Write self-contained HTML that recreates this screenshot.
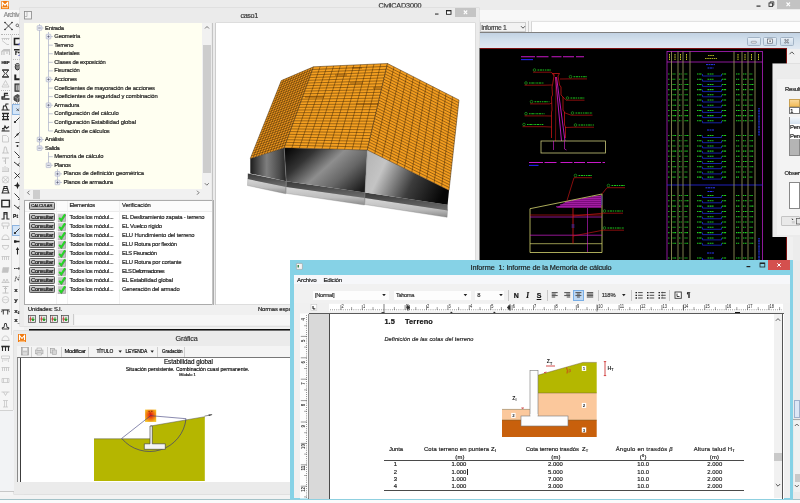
<!DOCTYPE html>
<html><head><meta charset="utf-8"><title>CivilCAD3000</title>
<style>
html,body{margin:0;padding:0;background:#f0f0f0}
body{width:800px;height:503px;overflow:hidden;position:relative;font-family:"Liberation Sans",sans-serif}
#root{position:absolute;left:0;top:0;width:800px;height:503px;overflow:hidden;filter:blur(0.3px)}
.r{position:absolute;display:block}
.t{position:absolute;white-space:nowrap;font-family:"Liberation Sans",sans-serif;-webkit-text-stroke:0.18px currentColor}
svg{overflow:visible}
</style></head>
<body><div id="root">
<div class="r" style="left:0px;top:0px;width:800px;height:503px;background:#f0f0f0;"></div>
<div class="r" style="left:0px;top:0px;width:800px;height:10px;background:#ececec;"></div>
<div class="r" style="left:1px;top:1px;width:8px;height:8px;background:#f07a10;"></div>
<svg class="r" style="left:1px;top:1px" width="8" height="8" viewBox="0 0 8 8"><path d="M1.3 5.5V1.5L4 4.2 6.7 1.5V5.5" stroke="#fff" stroke-width="1.2" fill="none"/><rect x="1" y="6.2" width="6" height="1" fill="#ffd9a8"/></svg>
<div class="t" style="left:378.50px;top:1.08px;font-size:7.2px;line-height:9.2px;color:#333;letter-spacing:-0.151px;">CivilCAD3000</div>
<div class="r" style="left:777px;top:0px;width:23px;height:9px;background:#c3c3c3;"></div>
<svg class="r" style="left:750px;top:0" width="50" height="10" viewBox="0 0 50 10"><rect x="6.5" y="5.5" width="4" height="1.2" fill="#333"/><rect x="19" y="3" width="3.6" height="3.4" fill="none" stroke="#333" stroke-width="0.9"/><path d="M20.2 3V1.8h3.6v3.4H22.6" fill="none" stroke="#333" stroke-width="0.8"/><path d="M36.5 2.5l3.5 3.6M40 2.5l-3.5 3.6" stroke="#fff" stroke-width="1.1"/></svg>
<div class="r" style="left:0px;top:10px;width:800px;height:10px;background:#f8f8f8;"></div>
<div class="t" style="left:3.80px;top:11.43px;font-size:6.6px;line-height:8.6px;color:#8a8a8a;letter-spacing:-0.523px;">Archiv</div>
<div class="r" style="left:0px;top:20px;width:800px;height:13px;background:#f4f4f4;"></div>
<div class="r" style="left:0px;top:32px;width:800px;height:1px;background:#dcdcdc;"></div>
<div class="r" style="left:0px;top:20px;width:24px;height:483px;background:#f5f5f5;"></div>
<div class="r" style="left:11.2px;top:35px;width:0.7px;height:300px;background:#dcdcdc;"></div>
<svg class="r" style="left:3px;top:21px" width="20" height="11" viewBox="0 0 20 11"><path d="M2 1.5l7 7M9 1.5l-7 7" stroke="#222" stroke-width="0.8"/><circle cx="2" cy="1.5" r="0.8" fill="#222"/><circle cx="9" cy="1.5" r="0.8" fill="#222"/><circle cx="2" cy="8.5" r="0.8" fill="#222"/><circle cx="9" cy="8.5" r="0.8" fill="#222"/><circle cx="14.3" cy="4.3" r="1.3" fill="none" stroke="#444" stroke-width="0.7"/><path d="M15.3 5.4l1.1 1.1" stroke="#444" stroke-width="0.7"/></svg>
<div class="r" style="left:1px;top:33.5px;width:18px;height:0;border-top:0.8px dotted #b5b5b5"></div>
<svg class="r" style="left:1px;top:36.5px" width="9" height="9" viewBox="0 0 9 9"><path d="M0.5 1.5h8M1.5 1.5v1.5M3.5 1.5v1.5M5.5 1.5v1.5M7.5 1.5v1.5M1 3.5l5 4h2" fill="none" stroke="#c2c2c2" stroke-width="0.8"/></svg>
<svg class="r" style="left:1px;top:46.5px" width="9" height="9" viewBox="0 0 9 9"><path d="M0.8 8V4.5L3 2.5h5.5V8M3 4.5V8M6 4.5V7" fill="none" stroke="#c2c2c2" stroke-width="1.1"/><path d="M1 4l2-1.5h5.5v2H1z" fill="#c2c2c2"/></svg>
<div class="t" style="left:1.60px;top:59.84px;font-size:4.2px;line-height:6.2px;color:#111;letter-spacing:-0.267px;font-weight:bold;">HEF</div>
<svg class="r" style="left:1px;top:68.5px" width="9" height="9" viewBox="0 0 9 9"><path d="M1.5 1h6L5 4.5 7.5 8h-6L4 4.500z" fill="none" stroke="#2a2a2a" stroke-width="0.9"/><path d="M1 1h7M1 8h7" stroke="#2a2a2a" stroke-width="1"/></svg>
<svg class="r" style="left:1px;top:79.0px" width="9" height="9" viewBox="0 0 9 9"><path d="M1 8l3.5-6.500L8 8zM3 6h3" fill="none" stroke="#c2c2c2" stroke-width="0.8"/></svg>
<svg class="r" style="left:1px;top:90.5px" width="9" height="9" viewBox="0 0 9 9"><path d="M0.5 8h8M1 8V6h2.500V2.500H7" fill="none" stroke="#2a2a2a" stroke-width="1.3"/><path d="M4 4.500h3.500" stroke="#2a2a2a" stroke-width="0.7"/></svg>
<svg class="r" style="left:1px;top:101.5px" width="9" height="9" viewBox="0 0 9 9"><path d="M0.5 8h8M2 8l0.500-4h2l0.500-2h2.500M5 4l1.500 4" fill="none" stroke="#2a2a2a" stroke-width="1.1"/></svg>
<svg class="r" style="left:1px;top:112.0px" width="9" height="9" viewBox="0 0 9 9"><path d="M1 1.500h7M1 7.500h7" stroke="#2a2a2a" stroke-width="1.700"/><path d="M2.500 2v5M6.500 2v5M1 4.500h7" stroke="#2a2a2a" stroke-width="1.100"/></svg>
<svg class="r" style="left:1px;top:123.0px" width="9" height="9" viewBox="0 0 9 9"><path d="M0.500 8h8M1 5.500h2l1-2.500 1.500 2.500L8 3.500" fill="none" stroke="#2a2a2a" stroke-width="1.100"/><path d="M1 7h3" stroke="#2a2a2a" stroke-width="1"/></svg>
<svg class="r" style="left:1px;top:133.5px" width="9" height="9" viewBox="0 0 9 9"><path d="M1.500 1.500h4l2 2V8h-6z" fill="none" stroke="#c2c2c2" stroke-width="0.800"/></svg>
<svg class="r" style="left:1px;top:144.5px" width="9" height="9" viewBox="0 0 9 9"><path d="M1 8h7M2.500 8l1-6h1.500l1.500 6" fill="none" stroke="#c2c2c2" stroke-width="0.900"/></svg>
<svg class="r" style="left:1px;top:155.5px" width="9" height="9" viewBox="0 0 9 9"><path d="M1 2h7M4.500 2v6M2.500 5h2" fill="none" stroke="#c2c2c2" stroke-width="1"/></svg>
<svg class="r" style="left:1px;top:164.0px" width="9" height="9" viewBox="0 0 9 9"><path d="M1 7.500h7M2 7V3M4 7V2M6 7V3M7.500 7V4" fill="none" stroke="#c2c2c2" stroke-width="0.800"/></svg>
<svg class="r" style="left:1px;top:174.5px" width="9" height="9" viewBox="0 0 9 9"><path d="M1.500 2l6 5.500M7.500 2l-6 5.500" stroke="#c2c2c2" stroke-width="0.800"/><circle cx="4.500" cy="4.700" r="3.300" fill="none" stroke="#c2c2c2" stroke-width="0.700"/></svg>
<svg class="r" style="left:1px;top:185.0px" width="9" height="9" viewBox="0 0 9 9"><path d="M0.500 8h8M1.500 7.500l1-4h4l1 4M3 3.500V1.500h3v2" fill="none" stroke="#2a2a2a" stroke-width="1.100"/><path d="M2.500 5.500h4" stroke="#2a2a2a" stroke-width="0.700"/></svg>
<svg class="r" style="left:1px;top:199.0px" width="9" height="9" viewBox="0 0 9 9"><rect x="0.800" y="1.300" width="7.600" height="6.500" fill="none" stroke="#2a2a2a" stroke-width="1.400"/></svg>
<svg class="r" style="left:1px;top:210.5px" width="9" height="9" viewBox="0 0 9 9"><path d="M0.500 8h2.500V3h3v5h2.500M3 3V1.500h3V3" fill="none" stroke="#2a2a2a" stroke-width="1.200"/></svg>
<svg class="r" style="left:1px;top:221.0px" width="9" height="9" viewBox="0 0 9 9"><path d="M1 2h7v3H1zM2.500 5v3M6.500 5v3" fill="none" stroke="#c2c2c2" stroke-width="0.800"/></svg>
<svg class="r" style="left:1px;top:232.0px" width="9" height="9" viewBox="0 0 9 9"><path d="M1 7.500c0-6 7-6 7 0zM0.500 7.500h8" fill="none" stroke="#c2c2c2" stroke-width="0.800"/></svg>
<svg class="r" style="left:1px;top:242.5px" width="9" height="9" viewBox="0 0 9 9"><path d="M1 2.500h7M1.500 2.500c0 5 6 5 6 0" fill="none" stroke="#c2c2c2" stroke-width="0.800"/></svg>
<svg class="r" style="left:1px;top:253.5px" width="9" height="9" viewBox="0 0 9 9"><path d="M0.500 2.500h8M1.500 2.500V6M3.500 2.500V6M5.500 2.500V6M7.500 2.500V6" fill="none" stroke="#c2c2c2" stroke-width="0.800"/></svg>
<svg class="r" style="left:1px;top:264.5px" width="9" height="9" viewBox="0 0 9 9"><path d="M2 2.500h6L7 7.500H1z" fill="#c2c2c2" stroke="#c2c2c2" stroke-width="0.500"/></svg>
<svg class="r" style="left:1px;top:275.0px" width="9" height="9" viewBox="0 0 9 9"><path d="M0.500 7.500h8M1.500 7.500L3 4l1.500 3.500L6 4l1.500 3.500" fill="none" stroke="#c2c2c2" stroke-width="0.800"/></svg>
<svg class="r" style="left:1px;top:285.0px" width="9" height="9" viewBox="0 0 9 9"><path d="M1.500 1.500h6M1.500 8h6M4.500 1.500V8M3 3.500h3" fill="none" stroke="#c2c2c2" stroke-width="1"/></svg>
<svg class="r" style="left:1px;top:295.2px" width="9" height="9" viewBox="0 0 9 9"><circle cx="4.500" cy="4.700" r="3.200" fill="none" stroke="#c2c2c2" stroke-width="0.800"/><path d="M2 4.700h5" stroke="#c2c2c2" stroke-width="0.600"/></svg>
<svg class="r" style="left:1px;top:307.0px" width="9" height="9" viewBox="0 0 9 9"><path d="M0.500 3h8" stroke="#2a2a2a" stroke-width="1.100"/><path d="M2.300 3V7.500M6.700 3V7.500M0.800 4v1.200M8.200 4v1.200" stroke="#2a2a2a" stroke-width="0.900" fill="none"/></svg>
<svg class="r" style="left:1px;top:320.5px" width="9" height="9" viewBox="0 0 9 9"><path d="M1 8h7M1.300 8V6.500h1.700L3.700 2.500h1.600l0.700 4H7.700V8" fill="none" stroke="#2a2a2a" stroke-width="0.900"/></svg>
<svg class="r" style="left:1px;top:332.5px" width="9" height="9" viewBox="0 0 9 9"><path d="M1 7.500c0-6 7-6 7 0zM0.500 7.500h8" fill="none" stroke="#c2c2c2" stroke-width="0.800"/></svg>
<svg class="r" style="left:1px;top:343.5px" width="9" height="9" viewBox="0 0 9 9"><path d="M0.300 2.500h8.400" stroke="#2a2a2a" stroke-width="1.600"/><path d="M1.500 3V7M4.500 3V7M7.500 3V7" stroke="#2a2a2a" stroke-width="1.100"/></svg>
<svg class="r" style="left:1px;top:354.1px" width="9" height="9" viewBox="0 0 9 9"><path d="M0.500 2h8v2.500h-8zM2 4.500L1.500 8M7 4.500L7.500 8M3 6h3" fill="none" stroke="#c2c2c2" stroke-width="0.700"/></svg>
<svg class="r" style="left:1px;top:365.0px" width="9" height="9" viewBox="0 0 9 9"><path d="M0.500 2.500h8M1.500 2.500V6M3.500 2.500V6M5.500 2.500V6M7.500 2.500V6" fill="none" stroke="#c2c2c2" stroke-width="0.800"/></svg>
<svg class="r" style="left:1px;top:375.5px" width="9" height="9" viewBox="0 0 9 9"><path d="M1 2.500h7v4H1zM2.500 2.500v4M6.500 2.500v4" fill="none" stroke="#c2c2c2" stroke-width="0.700"/></svg>
<svg class="r" style="left:1px;top:388.5px" width="9" height="9" viewBox="0 0 9 9"><path d="M0.500 3h8M2.500 3l2 3.500 2-3.500" fill="none" stroke="#c2c2c2" stroke-width="0.800"/></svg>
<svg class="r" style="left:1px;top:398.5px" width="9" height="9" viewBox="0 0 9 9"><path d="M2 1.500h5M2 8h5M3.500 1.500V8M5.500 1.500V8" fill="none" stroke="#c2c2c2" stroke-width="0.700"/></svg>
<svg class="r" style="left:12.5px;top:36.5px" width="9" height="9" viewBox="0 0 9 9"><path d="M7 1.500H1.500v6H7" fill="none" stroke="#222" stroke-width="1.600"/><path d="M4.500 8l3.500-3.500V8z" fill="#3a3ab8"/></svg>
<svg class="r" style="left:12.5px;top:47.5px" width="9" height="9" viewBox="0 0 9 9"><path d="M1 1.800h6.500M2 4h2.500M2 6h1.500M5 4.500h2.500" fill="none" stroke="#222" stroke-width="1.500"/><path d="M5 8l3-3v3z" fill="#3a3ab8"/></svg>
<svg class="r" style="left:12.5px;top:62.0px" width="9" height="9" viewBox="0 0 9 9"><ellipse cx="4.500" cy="4.800" rx="2.300" ry="3.200" fill="#8a8a8a" stroke="#222" stroke-width="0.900"/><ellipse cx="4.500" cy="2.800" rx="2.300" ry="1" fill="#ccc" stroke="#222" stroke-width="0.600"/></svg>
<svg class="r" style="left:12.5px;top:72.5px" width="9" height="9" viewBox="0 0 9 9"><path d="M2.300 1.500v4.800H8" fill="none" stroke="#222" stroke-width="2"/></svg>
<svg class="r" style="left:12.5px;top:82.5px" width="9" height="9" viewBox="0 0 9 9"><rect x="2" y="1" width="5.500" height="7.200" fill="#8a8a8a" stroke="#222" stroke-width="1"/><path d="M3.500 2.500v4.500M5.500 2.500v4.500" stroke="#ddd" stroke-width="0.500"/></svg>
<svg class="r" style="left:12.5px;top:93.0px" width="9" height="9" viewBox="0 0 9 9"><path d="M1 3.500l3.500-2 3.500 2v3.500l-3.500 2-3.500-2z" fill="#555" stroke="#222" stroke-width="0.700"/><path d="M1 3.500l3.500 2 3.500-2M4.500 5.500V9" stroke="#bbb" stroke-width="0.500" fill="none"/></svg>
<div class="r" style="left:12.3px;top:103.5px;width:9.5px;height:11px;background:#d3e5f8;border:0.6px solid #8db4e0;box-sizing:border-box"></div>
<svg class="r" style="left:12.5px;top:104.5px" width="9" height="9" viewBox="0 0 9 9"><path d="M3.500 3.500l2.500 2.500M6 3.500L3.500 6" stroke="#333" stroke-width="0.700"/></svg>
<svg class="r" style="left:12.5px;top:115.0px" width="9" height="9" viewBox="0 0 9 9"><path d="M1.500 7.500l6-6" stroke="#222" stroke-width="0.900"/><circle cx="2" cy="7" r="1.100" fill="#222"/></svg>
<svg class="r" style="left:12.5px;top:130.3px" width="9" height="9" viewBox="0 0 9 9"><path d="M1.500 7.500l6-6" stroke="#222" stroke-width="0.900"/><circle cx="4.500" cy="4.500" r="1" fill="#222"/></svg>
<svg class="r" style="left:12.5px;top:140.3px" width="9" height="9" viewBox="0 0 9 9"><circle cx="4.500" cy="6" r="1" fill="#222"/><path d="M2.500 2.500h4" stroke="#222" stroke-width="0.800"/></svg>
<svg class="r" style="left:12.5px;top:149.8px" width="9" height="9" viewBox="0 0 9 9"><path d="M1.500 1.500l6 6" stroke="#222" stroke-width="0.900"/><path d="M5 7.500h2.500V5" stroke="#222" stroke-width="0.800" fill="none"/></svg>
<svg class="r" style="left:12.5px;top:159.5px" width="9" height="9" viewBox="0 0 9 9"><path d="M1 2l6.500 5M7.500 2.500l-3 2.500" stroke="#222" stroke-width="0.900" fill="none"/></svg>
<svg class="r" style="left:12.5px;top:170.5px" width="9" height="9" viewBox="0 0 9 9"><path d="M1.500 1.500l6 6M7.500 1.500l-6 6" stroke="#222" stroke-width="0.900"/></svg>
<svg class="r" style="left:12.5px;top:181.1px" width="9" height="9" viewBox="0 0 9 9"><path d="M4.500 0.800l1 2.700 2.700 1-2.700 1-1 2.700-1-2.700-2.700-1 2.700-1z" fill="#222"/></svg>
<svg class="r" style="left:12.5px;top:191.5px" width="9" height="9" viewBox="0 0 9 9"><path d="M1.500 1.500l6 6" stroke="#222" stroke-width="0.900"/><path d="M5 7.500h2.500V5" stroke="#222" stroke-width="0.800" fill="none"/></svg>
<svg class="r" style="left:12.5px;top:203.0px" width="9" height="9" viewBox="0 0 9 9"><path d="M1 2l6.500 5M7.500 2.500l-3 2.500" stroke="#222" stroke-width="0.900" fill="none"/></svg>
<div class="t" style="left:13.00px;top:214.18px;font-size:4.8px;line-height:6.8px;color:#111;letter-spacing:0.400px;font-weight:bold;">Pt</div>
<div class="r" style="left:12.3px;top:224.5px;width:9.5px;height:11px;background:#d3e5f8;border:0.6px solid #8db4e0;box-sizing:border-box"></div>
<svg class="r" style="left:12.5px;top:225.5px" width="9" height="9" viewBox="0 0 9 9"><path d="M1.500 7.500l6-6" stroke="#222" stroke-width="0.900"/><circle cx="2" cy="7" r="1.100" fill="#222"/></svg>
<svg class="r" style="left:12.5px;top:237.3px" width="9" height="9" viewBox="0 0 9 9"><path d="M1 4.500h7" stroke="#222" stroke-width="1.500"/><rect x="1" y="3.300" width="2.400" height="2.400" fill="#222"/></svg>
<svg class="r" style="left:12.5px;top:246.0px" width="9" height="9" viewBox="0 0 9 9"><path d="M4.500 8.500V2.500" stroke="#222" stroke-width="1.100"/><path d="M2.800 4L4.500 1l1.700 3z" fill="#222"/></svg>
<svg class="r" style="left:12.5px;top:264.0px" width="9" height="9" viewBox="0 0 9 9"><path d="M1 4.500h6" stroke="#222" stroke-width="0.900" stroke-dasharray="1.500 0.700"/><path d="M5.500 3l2.500 1.500-2.500 1.500z" fill="#222"/></svg>
<svg class="r" style="left:12.5px;top:273.9px" width="9" height="9" viewBox="0 0 9 9"><path d="M2 7.500l1-5 2.500 4 1-5" stroke="#222" stroke-width="0.800" fill="none" stroke-dasharray="1.400 0.600"/></svg>
<div class="t" style="left:14.30px;top:286.36px;font-size:6.2px;line-height:8.2px;color:#111;letter-spacing:0.000px;font-weight:bold;">x</div>
<div class="t" style="left:14.30px;top:296.26px;font-size:6.2px;line-height:8.2px;color:#111;letter-spacing:0.000px;font-weight:bold;">y</div>
<div class="t" style="left:14.30px;top:307.36px;font-size:6.2px;line-height:8.2px;color:#111;letter-spacing:0.000px;font-weight:bold;">x</div>
<div class="t" style="left:17.80px;top:311.01px;font-size:3.4px;line-height:5.4px;color:#111;letter-spacing:0.000px;font-weight:bold;">2</div>
<div class="t" style="left:14.30px;top:316.36px;font-size:6.2px;line-height:8.2px;color:#111;letter-spacing:0.000px;font-weight:bold;">x</div>
<div class="t" style="left:17.80px;top:320.01px;font-size:3.4px;line-height:5.4px;color:#111;letter-spacing:0.000px;font-weight:bold;">_</div>
<div class="r" style="left:13px;top:59.4px;width:7px;height:0;border-top:0.8px dotted #bbb"></div>
<div class="r" style="left:13px;top:103.2px;width:7px;height:0;border-top:0.8px dotted #bbb"></div>
<div class="r" style="left:1px;top:89.5px;width:9px;height:0;border-top:0.8px dotted #bbb"></div>
<div class="r" style="left:479.5px;top:21.8px;width:46.5px;height:10px;background:#f2f2f2;border:0.600px solid #cdcdcd;box-sizing:border-box"></div>
<div class="t" style="left:481.20px;top:24.01px;font-size:6.8px;line-height:8.8px;color:#3c3c3c;letter-spacing:-0.392px;">Informe 1</div>
<svg class="r" style="left:519.5px;top:25.3px" width="6" height="5" viewBox="0 0 6 5"><path d="M1 1.200l2 2 2-2" stroke="#444" stroke-width="0.900" fill="none"/></svg>
<div class="r" style="left:528px;top:21px;width:0.7px;height:11px;background:#cfcfcf;"></div>
<div class="r" style="left:530.5px;top:21px;width:270px;height:11px;background:#fdfdfd;border-left:0.6px solid #d5d5d5;border-top:0.6px solid #e2e2e2;box-sizing:border-box"></div>
<div class="r" style="left:479.5px;top:32px;width:321px;height:1px;background:#808080;"></div>
<div class="r" style="left:479.5px;top:33px;width:321px;height:15.5px;background:linear-gradient(#c2d2e3,#d3e0ec 45%,#e1e9f2);"></div>
<div class="r" style="left:746.5px;top:36.7px;width:14.3px;height:9px;background:linear-gradient(#e9f0f7,#cddbe9);border:0.6px solid #a3b4c6;border-radius:1.5px;box-sizing:border-box"></div>
<div class="r" style="left:763px;top:36.7px;width:14.3px;height:9px;background:linear-gradient(#e9f0f7,#cddbe9);border:0.6px solid #a3b4c6;border-radius:1.5px;box-sizing:border-box"></div>
<div class="r" style="left:779.5px;top:36.7px;width:14.3px;height:9px;background:linear-gradient(#e9f0f7,#cddbe9);border:0.6px solid #a3b4c6;border-radius:1.5px;box-sizing:border-box"></div>
<svg class="r" style="left:746px;top:36px" width="50" height="11" viewBox="0 0 50 11"><rect x="5.3" y="5.3" width="5" height="1.8" rx="0.5" fill="#f8f8f8" stroke="#5a6270" stroke-width="0.5"/><rect x="21.6" y="3" width="5" height="4.2" fill="#f8f8f8" stroke="#5a6270" stroke-width="0.7"/><rect x="23.200" y="4.500" width="1.800" height="1.300" fill="#5a6270"/><path d="M38.600 3.200l4 4M42.600 3.200l-4 4" stroke="#5a6270" stroke-width="1.500"/><path d="M38.600 3.200l4 4M42.600 3.200l-4 4" stroke="#f8f8f8" stroke-width="0.600"/></svg>
<div class="r" style="left:479px;top:48px;width:308px;height:215px;background:#000;"></div>
<div class="r" style="left:479px;top:48px;width:308px;height:0.8px;background:#7a1010;"></div>
<div class="r" style="left:786.2px;top:48px;width:0.8px;height:215px;background:#7a1010;"></div>
<div class="r" style="left:479px;top:48px;width:1px;height:215px;background:#222;"></div>
<div class="r" style="left:787px;top:48.5px;width:13px;height:215px;background:#f0f0f0;"></div>
<svg class="r" style="left:788px;top:50px" width="8" height="6" viewBox="0 0 8 6"><path d="M1.500 4.200l2.300-2.300 2.300 2.300" stroke="#444" stroke-width="0.900" fill="none"/></svg>
<svg class="r" style="left:479px;top:48px" width="308" height="215" viewBox="479 48 308 215"><path d="M521 56.700H584" stroke="#c818c8" stroke-width="1.150" stroke-dasharray="14 1.500 12 3 10 1.500 11 2"/><path d="M521 59.600H533" stroke="#2222f0" stroke-width="1.100"/><circle cx="534.5" cy="70" r="1.300" fill="none" stroke="#2b2" stroke-width="0.600"/><path d="M537.5 70H551" stroke="#1cc41c" stroke-width="1.050" stroke-dasharray="1.600 0.700 2.600 0.600 1 0.800"/><path d="M533 72.2H551" stroke="#e01818" stroke-width="0.600"/><path d="M551 72.2L555 75.5" stroke="#e01818" stroke-width="0.600" fill="none"/><circle cx="570.5" cy="76.7" r="1.300" fill="none" stroke="#2b2" stroke-width="0.600"/><path d="M573.5 76.7H587" stroke="#1cc41c" stroke-width="1.050" stroke-dasharray="1.600 0.700 2.600 0.600 1 0.800"/><path d="M569 78.9H587" stroke="#e01818" stroke-width="0.600"/><path d="M569 78.9L560 79" stroke="#e01818" stroke-width="0.600" fill="none"/><circle cx="526.0" cy="83" r="1.300" fill="none" stroke="#2b2" stroke-width="0.600"/><path d="M529.0 83H544" stroke="#1cc41c" stroke-width="1.050" stroke-dasharray="1.600 0.700 2.600 0.600 1 0.800"/><path d="M524.5 85.2H544" stroke="#e01818" stroke-width="0.600"/><path d="M544 85.2L552 85" stroke="#e01818" stroke-width="0.600" fill="none"/><circle cx="567.5" cy="98" r="1.300" fill="none" stroke="#2b2" stroke-width="0.600"/><path d="M570.5 98H584.5" stroke="#1cc41c" stroke-width="1.050" stroke-dasharray="1.600 0.700 2.600 0.600 1 0.800"/><path d="M566 100.2H584.5" stroke="#e01818" stroke-width="0.600"/><path d="M566 100.2L563 97" stroke="#e01818" stroke-width="0.600" fill="none"/><circle cx="531.5" cy="101.7" r="1.300" fill="none" stroke="#2b2" stroke-width="0.600"/><path d="M534.5 101.7H549.5" stroke="#1cc41c" stroke-width="1.050" stroke-dasharray="1.600 0.700 2.600 0.600 1 0.800"/><path d="M530 103.9H549.5" stroke="#e01818" stroke-width="0.600"/><path d="M549.5 103.9L552 103" stroke="#e01818" stroke-width="0.600" fill="none"/><circle cx="572.5" cy="113" r="1.300" fill="none" stroke="#2b2" stroke-width="0.600"/><path d="M575.5 113H592.5" stroke="#1cc41c" stroke-width="1.050" stroke-dasharray="1.600 0.700 2.600 0.600 1 0.800"/><path d="M571 115.2H592.5" stroke="#e01818" stroke-width="0.600"/><path d="M571 115.2L564 112.5" stroke="#e01818" stroke-width="0.600" fill="none"/><circle cx="526.0" cy="113.7" r="1.300" fill="none" stroke="#2b2" stroke-width="0.600"/><path d="M529.0 113.7H544.5" stroke="#1cc41c" stroke-width="1.050" stroke-dasharray="1.600 0.700 2.600 0.600 1 0.800"/><path d="M524.5 115.9H544.5" stroke="#e01818" stroke-width="0.600"/><path d="M544.5 115.9L551.5 116" stroke="#e01818" stroke-width="0.600" fill="none"/><circle cx="524.0" cy="124.5" r="1.300" fill="none" stroke="#2b2" stroke-width="0.600"/><path d="M527.0 124.5H544" stroke="#1cc41c" stroke-width="1.050" stroke-dasharray="1.600 0.700 2.600 0.600 1 0.800"/><path d="M522.5 126.7H544" stroke="#e01818" stroke-width="0.600"/><path d="M544 126.7L551.5 127" stroke="#e01818" stroke-width="0.600" fill="none"/><circle cx="575.5" cy="125" r="1.300" fill="none" stroke="#2b2" stroke-width="0.600"/><path d="M578.5 125H594" stroke="#1cc41c" stroke-width="1.050" stroke-dasharray="1.600 0.700 2.600 0.600 1 0.800"/><path d="M574 127.2H594" stroke="#e01818" stroke-width="0.600"/><path d="M574 127.2L565 127.5" stroke="#e01818" stroke-width="0.600" fill="none"/><path d="M552.500 73.500h7l-1.500 2.500 1.500 9 1.500 2v8l2 2v13l1.500 2v13l1 2v11M552.500 73.500l1.500 2.500-1.500 9-0.500 2 0.500 8-1 2 0.500 13-0.500 2v13v13" stroke="#e01818" stroke-width="0.700" fill="none"/><path d="M555.500 77L561.500 141M556.500 77L565 141" stroke="#e020e0" stroke-width="0.800"/><path d="M556 77L555.500 141" stroke="#e01818" stroke-width="0.500"/><rect x="541" y="141" width="64.500" height="12" fill="none" stroke="#c9c97a" stroke-width="0.800"/><path d="M553.500 141v9M564.500 141v8l2 1" stroke="#e020e0" stroke-width="0.600" fill="none"/><path d="M529 162.500H605" stroke="#c818c8" stroke-width="1.150" stroke-dasharray="14 1.500 12 4 12 1.500 11 2"/><path d="M529 165.400H538.500" stroke="#2222f0" stroke-width="1.100"/><polygon points="556,208 567,201 601.500,195 601.500,208" fill="#7c0c7c"/><path d="M556 206.500H601M560 204.500H601M565 202.500H601M572 200.500H601M582 198.500H601M592 196.500H601" stroke="#c22cc2" stroke-width="0.550"/><path d="M530 252.500V208.700L602 194V252.500Z" fill="none" stroke="#d6d670" stroke-width="0.800"/><path d="M530 215H602" stroke="#e01818" stroke-width="0.600"/><path d="M530 217H602M530 235.200H602" stroke="#d020d0" stroke-width="0.700"/><path d="M530 243.700H602" stroke="#d6d670" stroke-width="0.700"/><path d="M573 208V243.500" stroke="#e01818" stroke-width="0.800"/><path d="M587.500 208V252" stroke="#d020d0" stroke-width="0.600"/><path d="M571.500 225h3M571.500 227h3" stroke="#4040ff" stroke-width="0.700"/><path d="M601.800 196v9" stroke="#3030d0" stroke-width="0.600"/><circle cx="575.5" cy="175.5" r="1.300" fill="none" stroke="#2b2" stroke-width="0.600"/><path d="M578.5 175.5H592" stroke="#1cc41c" stroke-width="1.050" stroke-dasharray="1.600 0.700 2.600 0.600 1 0.800"/><path d="M574 177.7H592" stroke="#e01818" stroke-width="0.600"/><path d="M574 177.7L567 200.5" stroke="#e01818" stroke-width="0.600" fill="none"/><circle cx="608.5" cy="185.5" r="1.300" fill="none" stroke="#2b2" stroke-width="0.600"/><path d="M611.5 185.5H625" stroke="#1cc41c" stroke-width="1.050" stroke-dasharray="1.600 0.700 2.600 0.600 1 0.800"/><path d="M607 187.7H625" stroke="#e01818" stroke-width="0.600"/><path d="M607 187.7L602 194" stroke="#e01818" stroke-width="0.600" fill="none"/><circle cx="604.5" cy="211" r="1.300" fill="none" stroke="#2b2" stroke-width="0.600"/><path d="M607.5 211H623" stroke="#1cc41c" stroke-width="1.050" stroke-dasharray="1.600 0.700 2.600 0.600 1 0.800"/><path d="M603 213.2H623" stroke="#e01818" stroke-width="0.600"/><path d="M603 213.2L573 216" stroke="#e01818" stroke-width="0.600" fill="none"/><circle cx="604.5" cy="228" r="1.300" fill="none" stroke="#2b2" stroke-width="0.600"/><path d="M607.5 228H624" stroke="#1cc41c" stroke-width="1.050" stroke-dasharray="1.600 0.700 2.600 0.600 1 0.800"/><path d="M603 230.2H624" stroke="#e01818" stroke-width="0.600"/><path d="M603 230.2L573 236" stroke="#e01818" stroke-width="0.600" fill="none"/><rect x="667" y="51.500" width="95.5" height="214" fill="none" stroke="#b020c0" stroke-width="0.800"/><path d="M667 62H762.5" stroke="#b020c0" stroke-width="0.800"/><path d="M667 185H762.5" stroke="#2828e8" stroke-width="0.800"/><path d="M671.5 51.500V265M678 51.500V265M683 51.500V265M690 51.500V265M734 51.500V265M742 51.500V265M748 51.500V265M755 51.500V265" stroke="#a0a060" stroke-width="0.800"/><path d="M669.5 54V60" stroke="#d8d82c" stroke-width="0.900" stroke-dasharray="1.600 0.700"/><path d="M675 54V60" stroke="#d8d82c" stroke-width="0.900" stroke-dasharray="1.600 0.700"/><path d="M680.5 54V60" stroke="#d8d82c" stroke-width="0.900" stroke-dasharray="1.600 0.700"/><path d="M686.5 54V60" stroke="#d8d82c" stroke-width="0.900" stroke-dasharray="1.600 0.700"/><path d="M738 54V60" stroke="#d8d82c" stroke-width="0.900" stroke-dasharray="1.600 0.700"/><path d="M745 54V60" stroke="#d8d82c" stroke-width="0.900" stroke-dasharray="1.600 0.700"/><path d="M751.5 54V60" stroke="#d8d82c" stroke-width="0.900" stroke-dasharray="1.600 0.700"/><path d="M758.5 54V60" stroke="#d8d82c" stroke-width="0.900" stroke-dasharray="1.600 0.700"/><path d="M708 55.500h6M705 58.500h12" stroke="#d0d02c" stroke-width="0.800" stroke-dasharray="1.600 0.600"/><path d="M706 64.600h9M707.500 68h6" stroke="#2838f0" stroke-width="1" stroke-dasharray="2 0.500"/><path d="M668.2 74.0h1.5" stroke="#1fd01f" stroke-width="1.050" stroke-dasharray="1.200 0.600 1.800 0.500"/><path d="M672.5 74.0h3.0" stroke="#1fd01f" stroke-width="1.050" stroke-dasharray="1.200 0.600 1.800 0.500"/><path d="M679 74.0h2.6" stroke="#1fd01f" stroke-width="1.050" stroke-dasharray="1.200 0.600 1.800 0.500"/><path d="M684.5 74.0h2.8" stroke="#1fd01f" stroke-width="1.050" stroke-dasharray="1.200 0.600 1.800 0.500"/><path d="M736 74.0h4.1" stroke="#1fd01f" stroke-width="1.050" stroke-dasharray="1.200 0.600 1.800 0.500"/><path d="M743 74.0h3.4" stroke="#1fd01f" stroke-width="1.050" stroke-dasharray="1.200 0.600 1.800 0.500"/><path d="M749.5 74.0h2.8" stroke="#1fd01f" stroke-width="1.050" stroke-dasharray="1.200 0.600 1.800 0.500"/><path d="M697 74.0h5M707.500 74.0h6M722 74.0h4.500" stroke="#1fd01f" stroke-width="1.050" stroke-dasharray="1.500 0.600 2 0.500"/><path d="M702.500 74.0v2H721.500v-2" stroke="#2030e8" stroke-width="0.700" fill="none"/><path d="M668.2 79.2h1.6" stroke="#1fd01f" stroke-width="1.050" stroke-dasharray="1.200 0.600 1.800 0.500"/><path d="M672.5 79.2h2.8" stroke="#1fd01f" stroke-width="1.050" stroke-dasharray="1.200 0.600 1.800 0.500"/><path d="M679 79.2h2.3" stroke="#1fd01f" stroke-width="1.050" stroke-dasharray="1.200 0.600 1.800 0.500"/><path d="M684.5 79.2h2.8" stroke="#1fd01f" stroke-width="1.050" stroke-dasharray="1.200 0.600 1.800 0.500"/><path d="M736 79.2h3.2" stroke="#1fd01f" stroke-width="1.050" stroke-dasharray="1.200 0.600 1.800 0.500"/><path d="M743 79.2h3.5" stroke="#1fd01f" stroke-width="1.050" stroke-dasharray="1.200 0.600 1.800 0.500"/><path d="M749.5 79.2h4.2" stroke="#1fd01f" stroke-width="1.050" stroke-dasharray="1.200 0.600 1.800 0.500"/><path d="M697 79.2h5M707.500 79.2h6M722 79.2h4.500" stroke="#1fd01f" stroke-width="1.050" stroke-dasharray="1.500 0.600 2 0.500"/><path d="M702.500 79.2v2H721.500v-2" stroke="#2030e8" stroke-width="0.700" fill="none"/><path d="M668.2 84.4h1.3" stroke="#1fd01f" stroke-width="1.050" stroke-dasharray="1.200 0.600 1.800 0.500"/><path d="M672.5 84.4h3.1" stroke="#1fd01f" stroke-width="1.050" stroke-dasharray="1.200 0.600 1.800 0.500"/><path d="M679 84.4h2.6" stroke="#1fd01f" stroke-width="1.050" stroke-dasharray="1.200 0.600 1.800 0.500"/><path d="M684.5 84.4h4.4" stroke="#1fd01f" stroke-width="1.050" stroke-dasharray="1.200 0.600 1.800 0.500"/><path d="M736 84.4h4.2" stroke="#1fd01f" stroke-width="1.050" stroke-dasharray="1.200 0.600 1.800 0.500"/><path d="M743 84.4h3.4" stroke="#1fd01f" stroke-width="1.050" stroke-dasharray="1.200 0.600 1.800 0.500"/><path d="M749.5 84.4h4.5" stroke="#1fd01f" stroke-width="1.050" stroke-dasharray="1.200 0.600 1.800 0.500"/><path d="M697 84.4h5M707.500 84.4h6M722 84.4h4.500" stroke="#1fd01f" stroke-width="1.050" stroke-dasharray="1.500 0.600 2 0.500"/><path d="M702.500 84.4v2H721.500v-2" stroke="#2030e8" stroke-width="0.700" fill="none"/><path d="M668.2 89.6h1.2" stroke="#1fd01f" stroke-width="1.050" stroke-dasharray="1.200 0.600 1.800 0.500"/><path d="M672.5 89.6h4.2" stroke="#1fd01f" stroke-width="1.050" stroke-dasharray="1.200 0.600 1.800 0.500"/><path d="M679 89.6h2.1" stroke="#1fd01f" stroke-width="1.050" stroke-dasharray="1.200 0.600 1.800 0.500"/><path d="M684.5 89.6h3.0" stroke="#1fd01f" stroke-width="1.050" stroke-dasharray="1.200 0.600 1.800 0.500"/><path d="M736 89.6h3.2" stroke="#1fd01f" stroke-width="1.050" stroke-dasharray="1.200 0.600 1.800 0.500"/><path d="M743 89.6h3.3" stroke="#1fd01f" stroke-width="1.050" stroke-dasharray="1.200 0.600 1.800 0.500"/><path d="M749.5 89.6h4.2" stroke="#1fd01f" stroke-width="1.050" stroke-dasharray="1.200 0.600 1.800 0.500"/><path d="M697 89.6h5M707.500 89.6h6M722 89.6h4.500" stroke="#1fd01f" stroke-width="1.050" stroke-dasharray="1.500 0.600 2 0.500"/><path d="M702.500 89.6v2H721.500v-2" stroke="#2030e8" stroke-width="0.700" fill="none"/><path d="M668.2 94.8h1.3" stroke="#1fd01f" stroke-width="1.050" stroke-dasharray="1.200 0.600 1.800 0.500"/><path d="M672.5 94.8h3.7" stroke="#1fd01f" stroke-width="1.050" stroke-dasharray="1.200 0.600 1.800 0.500"/><path d="M679 94.8h2.6" stroke="#1fd01f" stroke-width="1.050" stroke-dasharray="1.200 0.600 1.800 0.500"/><path d="M684.5 94.8h3.4" stroke="#1fd01f" stroke-width="1.050" stroke-dasharray="1.200 0.600 1.800 0.500"/><path d="M736 94.8h4.1" stroke="#1fd01f" stroke-width="1.050" stroke-dasharray="1.200 0.600 1.800 0.500"/><path d="M743 94.8h2.8" stroke="#1fd01f" stroke-width="1.050" stroke-dasharray="1.200 0.600 1.800 0.500"/><path d="M749.5 94.8h2.8" stroke="#1fd01f" stroke-width="1.050" stroke-dasharray="1.200 0.600 1.800 0.500"/><path d="M697 94.8h5M707.500 94.8h6M722 94.8h4.500" stroke="#1fd01f" stroke-width="1.050" stroke-dasharray="1.500 0.600 2 0.500"/><path d="M702.500 94.8v2H721.500v-2" stroke="#2030e8" stroke-width="0.700" fill="none"/><path d="M668.2 100.0h1.4" stroke="#1fd01f" stroke-width="1.050" stroke-dasharray="1.200 0.600 1.800 0.500"/><path d="M672.5 100.0h3.9" stroke="#1fd01f" stroke-width="1.050" stroke-dasharray="1.200 0.600 1.800 0.500"/><path d="M679 100.0h2.3" stroke="#1fd01f" stroke-width="1.050" stroke-dasharray="1.200 0.600 1.800 0.500"/><path d="M684.5 100.0h3.3" stroke="#1fd01f" stroke-width="1.050" stroke-dasharray="1.200 0.600 1.800 0.500"/><path d="M736 100.0h4.2" stroke="#1fd01f" stroke-width="1.050" stroke-dasharray="1.200 0.600 1.800 0.500"/><path d="M743 100.0h3.5" stroke="#1fd01f" stroke-width="1.050" stroke-dasharray="1.200 0.600 1.800 0.500"/><path d="M749.5 100.0h3.2" stroke="#1fd01f" stroke-width="1.050" stroke-dasharray="1.200 0.600 1.800 0.500"/><path d="M697 100.0h5M707.500 100.0h6M722 100.0h4.500" stroke="#1fd01f" stroke-width="1.050" stroke-dasharray="1.500 0.600 2 0.500"/><path d="M702.500 100.0v2H721.500v-2" stroke="#2030e8" stroke-width="0.700" fill="none"/><path d="M668.2 105.2h1.8" stroke="#1fd01f" stroke-width="1.050" stroke-dasharray="1.200 0.600 1.800 0.500"/><path d="M672.5 105.2h4.0" stroke="#1fd01f" stroke-width="1.050" stroke-dasharray="1.200 0.600 1.800 0.500"/><path d="M679 105.2h2.1" stroke="#1fd01f" stroke-width="1.050" stroke-dasharray="1.200 0.600 1.800 0.500"/><path d="M684.5 105.2h3.7" stroke="#1fd01f" stroke-width="1.050" stroke-dasharray="1.200 0.600 1.800 0.500"/><path d="M736 105.2h4.1" stroke="#1fd01f" stroke-width="1.050" stroke-dasharray="1.200 0.600 1.800 0.500"/><path d="M743 105.2h4.3" stroke="#1fd01f" stroke-width="1.050" stroke-dasharray="1.200 0.600 1.800 0.500"/><path d="M749.5 105.2h4.0" stroke="#1fd01f" stroke-width="1.050" stroke-dasharray="1.200 0.600 1.800 0.500"/><path d="M697 105.2h5M707.500 105.2h6M722 105.2h4.500" stroke="#1fd01f" stroke-width="1.050" stroke-dasharray="1.500 0.600 2 0.500"/><path d="M702.500 105.2v2H721.500v-2" stroke="#2030e8" stroke-width="0.700" fill="none"/><path d="M668.2 110.4h1.4" stroke="#1fd01f" stroke-width="1.050" stroke-dasharray="1.200 0.600 1.800 0.500"/><path d="M672.5 110.4h4.5" stroke="#1fd01f" stroke-width="1.050" stroke-dasharray="1.200 0.600 1.800 0.500"/><path d="M679 110.4h1.9" stroke="#1fd01f" stroke-width="1.050" stroke-dasharray="1.200 0.600 1.800 0.500"/><path d="M684.5 110.4h3.5" stroke="#1fd01f" stroke-width="1.050" stroke-dasharray="1.200 0.600 1.800 0.500"/><path d="M736 110.4h4.5" stroke="#1fd01f" stroke-width="1.050" stroke-dasharray="1.200 0.600 1.800 0.500"/><path d="M743 110.4h3.0" stroke="#1fd01f" stroke-width="1.050" stroke-dasharray="1.200 0.600 1.800 0.500"/><path d="M749.5 110.4h3.6" stroke="#1fd01f" stroke-width="1.050" stroke-dasharray="1.200 0.600 1.800 0.500"/><path d="M697 110.4h5M707.500 110.4h6M722 110.4h4.500" stroke="#1fd01f" stroke-width="1.050" stroke-dasharray="1.500 0.600 2 0.500"/><path d="M702.500 110.4v2H721.500v-2" stroke="#2030e8" stroke-width="0.700" fill="none"/><path d="M668.2 115.6h1.2" stroke="#1fd01f" stroke-width="1.050" stroke-dasharray="1.200 0.600 1.800 0.500"/><path d="M672.5 115.6h3.9" stroke="#1fd01f" stroke-width="1.050" stroke-dasharray="1.200 0.600 1.800 0.500"/><path d="M679 115.6h2.7" stroke="#1fd01f" stroke-width="1.050" stroke-dasharray="1.200 0.600 1.800 0.500"/><path d="M684.5 115.6h3.7" stroke="#1fd01f" stroke-width="1.050" stroke-dasharray="1.200 0.600 1.800 0.500"/><path d="M736 115.6h4.8" stroke="#1fd01f" stroke-width="1.050" stroke-dasharray="1.200 0.600 1.800 0.500"/><path d="M743 115.6h3.3" stroke="#1fd01f" stroke-width="1.050" stroke-dasharray="1.200 0.600 1.800 0.500"/><path d="M749.5 115.6h4.0" stroke="#1fd01f" stroke-width="1.050" stroke-dasharray="1.200 0.600 1.800 0.500"/><path d="M697 115.6h5M707.500 115.6h6M722 115.6h4.500" stroke="#1fd01f" stroke-width="1.050" stroke-dasharray="1.500 0.600 2 0.500"/><path d="M702.500 115.6v2H721.500v-2" stroke="#2030e8" stroke-width="0.700" fill="none"/><path d="M668.2 120.80000000000001h1.7" stroke="#1fd01f" stroke-width="1.050" stroke-dasharray="1.200 0.600 1.800 0.500"/><path d="M672.5 120.80000000000001h3.7" stroke="#1fd01f" stroke-width="1.050" stroke-dasharray="1.200 0.600 1.800 0.500"/><path d="M679 120.80000000000001h2.3" stroke="#1fd01f" stroke-width="1.050" stroke-dasharray="1.200 0.600 1.800 0.500"/><path d="M684.5 120.80000000000001h4.2" stroke="#1fd01f" stroke-width="1.050" stroke-dasharray="1.200 0.600 1.800 0.500"/><path d="M736 120.80000000000001h4.9" stroke="#1fd01f" stroke-width="1.050" stroke-dasharray="1.200 0.600 1.800 0.500"/><path d="M743 120.80000000000001h3.6" stroke="#1fd01f" stroke-width="1.050" stroke-dasharray="1.200 0.600 1.800 0.500"/><path d="M749.5 120.80000000000001h3.9" stroke="#1fd01f" stroke-width="1.050" stroke-dasharray="1.200 0.600 1.800 0.500"/><path d="M697 120.80000000000001h5M707.500 120.80000000000001h6M722 120.80000000000001h4.500" stroke="#1fd01f" stroke-width="1.050" stroke-dasharray="1.500 0.600 2 0.500"/><path d="M702.500 120.80000000000001v2H721.500v-2" stroke="#2030e8" stroke-width="0.700" fill="none"/><path d="M707 130h7" stroke="#2838f0" stroke-width="1" stroke-dasharray="2 0.500"/><path d="M668.2 135.5h1.2" stroke="#1fd01f" stroke-width="1.050" stroke-dasharray="1.200 0.600 1.800 0.500"/><path d="M672.5 135.5h4.0" stroke="#1fd01f" stroke-width="1.050" stroke-dasharray="1.200 0.600 1.800 0.500"/><path d="M679 135.5h2.6" stroke="#1fd01f" stroke-width="1.050" stroke-dasharray="1.200 0.600 1.800 0.500"/><path d="M684.5 135.5h4.5" stroke="#1fd01f" stroke-width="1.050" stroke-dasharray="1.200 0.600 1.800 0.500"/><path d="M736 135.5h4.6" stroke="#1fd01f" stroke-width="1.050" stroke-dasharray="1.200 0.600 1.800 0.500"/><path d="M743 135.5h3.2" stroke="#1fd01f" stroke-width="1.050" stroke-dasharray="1.200 0.600 1.800 0.500"/><path d="M749.5 135.5h3.4" stroke="#1fd01f" stroke-width="1.050" stroke-dasharray="1.200 0.600 1.800 0.500"/><path d="M697 135.5h5M707.500 135.5h6M722 135.5h4.500" stroke="#1fd01f" stroke-width="1.050" stroke-dasharray="1.500 0.600 2 0.500"/><path d="M702.500 135.5v2H721.500v-2" stroke="#2030e8" stroke-width="0.700" fill="none"/><path d="M668.2 140.7h1.7" stroke="#1fd01f" stroke-width="1.050" stroke-dasharray="1.200 0.600 1.800 0.500"/><path d="M672.5 140.7h2.7" stroke="#1fd01f" stroke-width="1.050" stroke-dasharray="1.200 0.600 1.800 0.500"/><path d="M679 140.7h2.4" stroke="#1fd01f" stroke-width="1.050" stroke-dasharray="1.200 0.600 1.800 0.500"/><path d="M684.5 140.7h3.0" stroke="#1fd01f" stroke-width="1.050" stroke-dasharray="1.200 0.600 1.800 0.500"/><path d="M736 140.7h3.2" stroke="#1fd01f" stroke-width="1.050" stroke-dasharray="1.200 0.600 1.800 0.500"/><path d="M743 140.7h2.8" stroke="#1fd01f" stroke-width="1.050" stroke-dasharray="1.200 0.600 1.800 0.500"/><path d="M749.5 140.7h4.1" stroke="#1fd01f" stroke-width="1.050" stroke-dasharray="1.200 0.600 1.800 0.500"/><path d="M697 140.7h5M707.500 140.7h6M722 140.7h4.500" stroke="#1fd01f" stroke-width="1.050" stroke-dasharray="1.500 0.600 2 0.500"/><path d="M702.500 140.7v2H721.500v-2" stroke="#2030e8" stroke-width="0.700" fill="none"/><path d="M668.2 145.9h1.3" stroke="#1fd01f" stroke-width="1.050" stroke-dasharray="1.200 0.600 1.800 0.500"/><path d="M672.5 145.9h3.1" stroke="#1fd01f" stroke-width="1.050" stroke-dasharray="1.200 0.600 1.800 0.500"/><path d="M679 145.9h2.3" stroke="#1fd01f" stroke-width="1.050" stroke-dasharray="1.200 0.600 1.800 0.500"/><path d="M684.5 145.9h4.3" stroke="#1fd01f" stroke-width="1.050" stroke-dasharray="1.200 0.600 1.800 0.500"/><path d="M736 145.9h3.2" stroke="#1fd01f" stroke-width="1.050" stroke-dasharray="1.200 0.600 1.800 0.500"/><path d="M743 145.9h3.5" stroke="#1fd01f" stroke-width="1.050" stroke-dasharray="1.200 0.600 1.800 0.500"/><path d="M749.5 145.9h3.7" stroke="#1fd01f" stroke-width="1.050" stroke-dasharray="1.200 0.600 1.800 0.500"/><path d="M697 145.9h5M707.500 145.9h6M722 145.9h4.500" stroke="#1fd01f" stroke-width="1.050" stroke-dasharray="1.500 0.600 2 0.500"/><path d="M702.500 145.9v2H721.500v-2" stroke="#2030e8" stroke-width="0.700" fill="none"/><path d="M668.2 151.1h1.9" stroke="#1fd01f" stroke-width="1.050" stroke-dasharray="1.200 0.600 1.800 0.500"/><path d="M672.5 151.1h4.2" stroke="#1fd01f" stroke-width="1.050" stroke-dasharray="1.200 0.600 1.800 0.500"/><path d="M679 151.1h2.8" stroke="#1fd01f" stroke-width="1.050" stroke-dasharray="1.200 0.600 1.800 0.500"/><path d="M684.5 151.1h3.2" stroke="#1fd01f" stroke-width="1.050" stroke-dasharray="1.200 0.600 1.800 0.500"/><path d="M736 151.1h3.8" stroke="#1fd01f" stroke-width="1.050" stroke-dasharray="1.200 0.600 1.800 0.500"/><path d="M743 151.1h3.3" stroke="#1fd01f" stroke-width="1.050" stroke-dasharray="1.200 0.600 1.800 0.500"/><path d="M749.5 151.1h4.3" stroke="#1fd01f" stroke-width="1.050" stroke-dasharray="1.200 0.600 1.800 0.500"/><path d="M697 151.1h5M707.500 151.1h6M722 151.1h4.500" stroke="#1fd01f" stroke-width="1.050" stroke-dasharray="1.500 0.600 2 0.500"/><path d="M702.500 151.1v2H721.500v-2" stroke="#2030e8" stroke-width="0.700" fill="none"/><path d="M668.2 156.3h2.0" stroke="#1fd01f" stroke-width="1.050" stroke-dasharray="1.200 0.600 1.800 0.500"/><path d="M672.5 156.3h3.0" stroke="#1fd01f" stroke-width="1.050" stroke-dasharray="1.200 0.600 1.800 0.500"/><path d="M679 156.3h2.0" stroke="#1fd01f" stroke-width="1.050" stroke-dasharray="1.200 0.600 1.800 0.500"/><path d="M684.5 156.3h3.1" stroke="#1fd01f" stroke-width="1.050" stroke-dasharray="1.200 0.600 1.800 0.500"/><path d="M736 156.3h3.5" stroke="#1fd01f" stroke-width="1.050" stroke-dasharray="1.200 0.600 1.800 0.500"/><path d="M743 156.3h3.6" stroke="#1fd01f" stroke-width="1.050" stroke-dasharray="1.200 0.600 1.800 0.500"/><path d="M749.5 156.3h3.8" stroke="#1fd01f" stroke-width="1.050" stroke-dasharray="1.200 0.600 1.800 0.500"/><path d="M697 156.3h5M707.500 156.3h6M722 156.3h4.500" stroke="#1fd01f" stroke-width="1.050" stroke-dasharray="1.500 0.600 2 0.500"/><path d="M702.500 156.3v2H721.500v-2" stroke="#2030e8" stroke-width="0.700" fill="none"/><path d="M668.2 161.5h1.4" stroke="#1fd01f" stroke-width="1.050" stroke-dasharray="1.200 0.600 1.800 0.500"/><path d="M672.5 161.5h2.7" stroke="#1fd01f" stroke-width="1.050" stroke-dasharray="1.200 0.600 1.800 0.500"/><path d="M679 161.5h2.3" stroke="#1fd01f" stroke-width="1.050" stroke-dasharray="1.200 0.600 1.800 0.500"/><path d="M684.5 161.5h3.4" stroke="#1fd01f" stroke-width="1.050" stroke-dasharray="1.200 0.600 1.800 0.500"/><path d="M736 161.5h4.1" stroke="#1fd01f" stroke-width="1.050" stroke-dasharray="1.200 0.600 1.800 0.500"/><path d="M743 161.5h4.4" stroke="#1fd01f" stroke-width="1.050" stroke-dasharray="1.200 0.600 1.800 0.500"/><path d="M749.5 161.5h3.9" stroke="#1fd01f" stroke-width="1.050" stroke-dasharray="1.200 0.600 1.800 0.500"/><path d="M697 161.5h5M707.500 161.5h6M722 161.5h4.500" stroke="#1fd01f" stroke-width="1.050" stroke-dasharray="1.500 0.600 2 0.500"/><path d="M702.500 161.5v2H721.500v-2" stroke="#2030e8" stroke-width="0.700" fill="none"/><path d="M668.2 166.7h1.6" stroke="#1fd01f" stroke-width="1.050" stroke-dasharray="1.200 0.600 1.800 0.500"/><path d="M672.5 166.7h3.8" stroke="#1fd01f" stroke-width="1.050" stroke-dasharray="1.200 0.600 1.800 0.500"/><path d="M679 166.7h2.6" stroke="#1fd01f" stroke-width="1.050" stroke-dasharray="1.200 0.600 1.800 0.500"/><path d="M684.5 166.7h2.8" stroke="#1fd01f" stroke-width="1.050" stroke-dasharray="1.200 0.600 1.800 0.500"/><path d="M736 166.7h4.8" stroke="#1fd01f" stroke-width="1.050" stroke-dasharray="1.200 0.600 1.800 0.500"/><path d="M743 166.7h4.1" stroke="#1fd01f" stroke-width="1.050" stroke-dasharray="1.200 0.600 1.800 0.500"/><path d="M749.5 166.7h4.3" stroke="#1fd01f" stroke-width="1.050" stroke-dasharray="1.200 0.600 1.800 0.500"/><path d="M697 166.7h5M707.500 166.7h6M722 166.7h4.500" stroke="#1fd01f" stroke-width="1.050" stroke-dasharray="1.500 0.600 2 0.500"/><path d="M702.500 166.7v2H721.500v-2" stroke="#2030e8" stroke-width="0.700" fill="none"/><path d="M668.2 171.9h1.8" stroke="#1fd01f" stroke-width="1.050" stroke-dasharray="1.200 0.600 1.800 0.500"/><path d="M672.5 171.9h3.4" stroke="#1fd01f" stroke-width="1.050" stroke-dasharray="1.200 0.600 1.800 0.500"/><path d="M679 171.9h2.3" stroke="#1fd01f" stroke-width="1.050" stroke-dasharray="1.200 0.600 1.800 0.500"/><path d="M684.5 171.9h2.9" stroke="#1fd01f" stroke-width="1.050" stroke-dasharray="1.200 0.600 1.800 0.500"/><path d="M736 171.9h4.3" stroke="#1fd01f" stroke-width="1.050" stroke-dasharray="1.200 0.600 1.800 0.500"/><path d="M743 171.9h2.8" stroke="#1fd01f" stroke-width="1.050" stroke-dasharray="1.200 0.600 1.800 0.500"/><path d="M749.5 171.9h2.8" stroke="#1fd01f" stroke-width="1.050" stroke-dasharray="1.200 0.600 1.800 0.500"/><path d="M697 171.9h5M707.500 171.9h6M722 171.9h4.500" stroke="#1fd01f" stroke-width="1.050" stroke-dasharray="1.500 0.600 2 0.500"/><path d="M702.500 171.9v2H721.500v-2" stroke="#2030e8" stroke-width="0.700" fill="none"/><path d="M668.2 177.1h1.4" stroke="#1fd01f" stroke-width="1.050" stroke-dasharray="1.200 0.600 1.800 0.500"/><path d="M672.5 177.1h3.0" stroke="#1fd01f" stroke-width="1.050" stroke-dasharray="1.200 0.600 1.800 0.500"/><path d="M679 177.1h2.2" stroke="#1fd01f" stroke-width="1.050" stroke-dasharray="1.200 0.600 1.800 0.500"/><path d="M684.5 177.1h2.8" stroke="#1fd01f" stroke-width="1.050" stroke-dasharray="1.200 0.600 1.800 0.500"/><path d="M736 177.1h3.0" stroke="#1fd01f" stroke-width="1.050" stroke-dasharray="1.200 0.600 1.800 0.500"/><path d="M743 177.1h3.0" stroke="#1fd01f" stroke-width="1.050" stroke-dasharray="1.200 0.600 1.800 0.500"/><path d="M749.5 177.1h2.9" stroke="#1fd01f" stroke-width="1.050" stroke-dasharray="1.200 0.600 1.800 0.500"/><path d="M697 177.1h5M707.500 177.1h6M722 177.1h4.500" stroke="#1fd01f" stroke-width="1.050" stroke-dasharray="1.500 0.600 2 0.500"/><path d="M702.500 177.1v2H721.500v-2" stroke="#2030e8" stroke-width="0.700" fill="none"/><path d="M705.500 187.800h10M707.500 191.500h6" stroke="#2838f0" stroke-width="1" stroke-dasharray="2 0.500"/><path d="M668.2 195.5h1.5" stroke="#1fd01f" stroke-width="1.050" stroke-dasharray="1.200 0.600 1.800 0.500"/><path d="M672.5 195.5h2.7" stroke="#1fd01f" stroke-width="1.050" stroke-dasharray="1.200 0.600 1.800 0.500"/><path d="M679 195.5h2.8" stroke="#1fd01f" stroke-width="1.050" stroke-dasharray="1.200 0.600 1.800 0.500"/><path d="M684.5 195.5h3.8" stroke="#1fd01f" stroke-width="1.050" stroke-dasharray="1.200 0.600 1.800 0.500"/><path d="M736 195.5h3.3" stroke="#1fd01f" stroke-width="1.050" stroke-dasharray="1.200 0.600 1.800 0.500"/><path d="M743 195.5h3.2" stroke="#1fd01f" stroke-width="1.050" stroke-dasharray="1.200 0.600 1.800 0.500"/><path d="M749.5 195.5h3.3" stroke="#1fd01f" stroke-width="1.050" stroke-dasharray="1.200 0.600 1.800 0.500"/><path d="M697 195.5h5M707.500 195.5h6M722 195.5h4.500" stroke="#1fd01f" stroke-width="1.050" stroke-dasharray="1.500 0.600 2 0.500"/><path d="M702.500 195.5v2H721.500v-2" stroke="#2030e8" stroke-width="0.700" fill="none"/><path d="M668.2 200.8h1.5" stroke="#1fd01f" stroke-width="1.050" stroke-dasharray="1.200 0.600 1.800 0.500"/><path d="M672.5 200.8h2.9" stroke="#1fd01f" stroke-width="1.050" stroke-dasharray="1.200 0.600 1.800 0.500"/><path d="M679 200.8h2.8" stroke="#1fd01f" stroke-width="1.050" stroke-dasharray="1.200 0.600 1.800 0.500"/><path d="M684.5 200.8h4.5" stroke="#1fd01f" stroke-width="1.050" stroke-dasharray="1.200 0.600 1.800 0.500"/><path d="M736 200.8h3.9" stroke="#1fd01f" stroke-width="1.050" stroke-dasharray="1.200 0.600 1.800 0.500"/><path d="M743 200.8h3.6" stroke="#1fd01f" stroke-width="1.050" stroke-dasharray="1.200 0.600 1.800 0.500"/><path d="M749.5 200.8h2.9" stroke="#1fd01f" stroke-width="1.050" stroke-dasharray="1.200 0.600 1.800 0.500"/><path d="M697 200.8h5M707.500 200.8h6M722 200.8h4.500" stroke="#1fd01f" stroke-width="1.050" stroke-dasharray="1.500 0.600 2 0.500"/><path d="M702.500 200.8v2H721.500v-2" stroke="#2030e8" stroke-width="0.700" fill="none"/><path d="M668.2 206.1h1.3" stroke="#1fd01f" stroke-width="1.050" stroke-dasharray="1.200 0.600 1.800 0.500"/><path d="M672.5 206.1h3.3" stroke="#1fd01f" stroke-width="1.050" stroke-dasharray="1.200 0.600 1.800 0.500"/><path d="M679 206.1h2.1" stroke="#1fd01f" stroke-width="1.050" stroke-dasharray="1.200 0.600 1.800 0.500"/><path d="M684.5 206.1h4.2" stroke="#1fd01f" stroke-width="1.050" stroke-dasharray="1.200 0.600 1.800 0.500"/><path d="M736 206.1h3.3" stroke="#1fd01f" stroke-width="1.050" stroke-dasharray="1.200 0.600 1.800 0.500"/><path d="M743 206.1h2.7" stroke="#1fd01f" stroke-width="1.050" stroke-dasharray="1.200 0.600 1.800 0.500"/><path d="M749.5 206.1h4.4" stroke="#1fd01f" stroke-width="1.050" stroke-dasharray="1.200 0.600 1.800 0.500"/><path d="M697 206.1h5M707.500 206.1h6M722 206.1h4.500" stroke="#1fd01f" stroke-width="1.050" stroke-dasharray="1.500 0.600 2 0.500"/><path d="M702.500 206.1v2H721.500v-2" stroke="#2030e8" stroke-width="0.700" fill="none"/><path d="M668.2 211.4h1.6" stroke="#1fd01f" stroke-width="1.050" stroke-dasharray="1.200 0.600 1.800 0.500"/><path d="M672.5 211.4h3.0" stroke="#1fd01f" stroke-width="1.050" stroke-dasharray="1.200 0.600 1.800 0.500"/><path d="M679 211.4h2.5" stroke="#1fd01f" stroke-width="1.050" stroke-dasharray="1.200 0.600 1.800 0.500"/><path d="M684.5 211.4h2.7" stroke="#1fd01f" stroke-width="1.050" stroke-dasharray="1.200 0.600 1.800 0.500"/><path d="M736 211.4h4.1" stroke="#1fd01f" stroke-width="1.050" stroke-dasharray="1.200 0.600 1.800 0.500"/><path d="M743 211.4h4.5" stroke="#1fd01f" stroke-width="1.050" stroke-dasharray="1.200 0.600 1.800 0.500"/><path d="M749.5 211.4h4.3" stroke="#1fd01f" stroke-width="1.050" stroke-dasharray="1.200 0.600 1.800 0.500"/><path d="M697 211.4h5M707.500 211.4h6M722 211.4h4.500" stroke="#1fd01f" stroke-width="1.050" stroke-dasharray="1.500 0.600 2 0.500"/><path d="M702.500 211.4v2H721.500v-2" stroke="#2030e8" stroke-width="0.700" fill="none"/><path d="M668.2 216.7h1.8" stroke="#1fd01f" stroke-width="1.050" stroke-dasharray="1.200 0.600 1.800 0.500"/><path d="M672.5 216.7h3.2" stroke="#1fd01f" stroke-width="1.050" stroke-dasharray="1.200 0.600 1.800 0.500"/><path d="M679 216.7h2.2" stroke="#1fd01f" stroke-width="1.050" stroke-dasharray="1.200 0.600 1.800 0.500"/><path d="M684.5 216.7h3.0" stroke="#1fd01f" stroke-width="1.050" stroke-dasharray="1.200 0.600 1.800 0.500"/><path d="M736 216.7h4.5" stroke="#1fd01f" stroke-width="1.050" stroke-dasharray="1.200 0.600 1.800 0.500"/><path d="M743 216.7h3.7" stroke="#1fd01f" stroke-width="1.050" stroke-dasharray="1.200 0.600 1.800 0.500"/><path d="M749.5 216.7h4.1" stroke="#1fd01f" stroke-width="1.050" stroke-dasharray="1.200 0.600 1.800 0.500"/><path d="M697 216.7h5M707.500 216.7h6M722 216.7h4.500" stroke="#1fd01f" stroke-width="1.050" stroke-dasharray="1.500 0.600 2 0.500"/><path d="M702.500 216.7v2H721.500v-2" stroke="#2030e8" stroke-width="0.700" fill="none"/><path d="M668.2 222.0h1.5" stroke="#1fd01f" stroke-width="1.050" stroke-dasharray="1.200 0.600 1.800 0.500"/><path d="M672.5 222.0h3.1" stroke="#1fd01f" stroke-width="1.050" stroke-dasharray="1.200 0.600 1.800 0.500"/><path d="M679 222.0h2.8" stroke="#1fd01f" stroke-width="1.050" stroke-dasharray="1.200 0.600 1.800 0.500"/><path d="M684.5 222.0h4.5" stroke="#1fd01f" stroke-width="1.050" stroke-dasharray="1.200 0.600 1.800 0.500"/><path d="M736 222.0h4.7" stroke="#1fd01f" stroke-width="1.050" stroke-dasharray="1.200 0.600 1.800 0.500"/><path d="M743 222.0h4.2" stroke="#1fd01f" stroke-width="1.050" stroke-dasharray="1.200 0.600 1.800 0.500"/><path d="M749.5 222.0h4.2" stroke="#1fd01f" stroke-width="1.050" stroke-dasharray="1.200 0.600 1.800 0.500"/><path d="M697 222.0h5M707.500 222.0h6M722 222.0h4.500" stroke="#1fd01f" stroke-width="1.050" stroke-dasharray="1.500 0.600 2 0.500"/><path d="M702.500 222.0v2H721.500v-2" stroke="#2030e8" stroke-width="0.700" fill="none"/><path d="M668.2 227.3h1.8" stroke="#1fd01f" stroke-width="1.050" stroke-dasharray="1.200 0.600 1.800 0.500"/><path d="M672.5 227.3h3.1" stroke="#1fd01f" stroke-width="1.050" stroke-dasharray="1.200 0.600 1.800 0.500"/><path d="M679 227.3h2.4" stroke="#1fd01f" stroke-width="1.050" stroke-dasharray="1.200 0.600 1.800 0.500"/><path d="M684.5 227.3h3.3" stroke="#1fd01f" stroke-width="1.050" stroke-dasharray="1.200 0.600 1.800 0.500"/><path d="M736 227.3h3.1" stroke="#1fd01f" stroke-width="1.050" stroke-dasharray="1.200 0.600 1.800 0.500"/><path d="M743 227.3h2.8" stroke="#1fd01f" stroke-width="1.050" stroke-dasharray="1.200 0.600 1.800 0.500"/><path d="M749.5 227.3h3.2" stroke="#1fd01f" stroke-width="1.050" stroke-dasharray="1.200 0.600 1.800 0.500"/><path d="M697 227.3h5M707.500 227.3h6M722 227.3h4.500" stroke="#1fd01f" stroke-width="1.050" stroke-dasharray="1.500 0.600 2 0.500"/><path d="M702.500 227.3v2H721.500v-2" stroke="#2030e8" stroke-width="0.700" fill="none"/><path d="M668.2 232.6h1.4" stroke="#1fd01f" stroke-width="1.050" stroke-dasharray="1.200 0.600 1.800 0.500"/><path d="M672.5 232.6h3.9" stroke="#1fd01f" stroke-width="1.050" stroke-dasharray="1.200 0.600 1.800 0.500"/><path d="M679 232.6h2.9" stroke="#1fd01f" stroke-width="1.050" stroke-dasharray="1.200 0.600 1.800 0.500"/><path d="M684.5 232.6h3.5" stroke="#1fd01f" stroke-width="1.050" stroke-dasharray="1.200 0.600 1.800 0.500"/><path d="M736 232.6h4.9" stroke="#1fd01f" stroke-width="1.050" stroke-dasharray="1.200 0.600 1.800 0.500"/><path d="M743 232.6h4.5" stroke="#1fd01f" stroke-width="1.050" stroke-dasharray="1.200 0.600 1.800 0.500"/><path d="M749.5 232.6h4.4" stroke="#1fd01f" stroke-width="1.050" stroke-dasharray="1.200 0.600 1.800 0.500"/><path d="M697 232.6h5M707.500 232.6h6M722 232.6h4.500" stroke="#1fd01f" stroke-width="1.050" stroke-dasharray="1.500 0.600 2 0.500"/><path d="M702.500 232.6v2H721.500v-2" stroke="#2030e8" stroke-width="0.700" fill="none"/><path d="M668.2 237.9h1.5" stroke="#1fd01f" stroke-width="1.050" stroke-dasharray="1.200 0.600 1.800 0.500"/><path d="M672.5 237.9h3.1" stroke="#1fd01f" stroke-width="1.050" stroke-dasharray="1.200 0.600 1.800 0.500"/><path d="M679 237.9h2.1" stroke="#1fd01f" stroke-width="1.050" stroke-dasharray="1.200 0.600 1.800 0.500"/><path d="M684.5 237.9h3.1" stroke="#1fd01f" stroke-width="1.050" stroke-dasharray="1.200 0.600 1.800 0.500"/><path d="M736 237.9h3.4" stroke="#1fd01f" stroke-width="1.050" stroke-dasharray="1.200 0.600 1.800 0.500"/><path d="M743 237.9h3.8" stroke="#1fd01f" stroke-width="1.050" stroke-dasharray="1.200 0.600 1.800 0.500"/><path d="M749.5 237.9h4.3" stroke="#1fd01f" stroke-width="1.050" stroke-dasharray="1.200 0.600 1.800 0.500"/><path d="M697 237.9h5M707.500 237.9h6M722 237.9h4.500" stroke="#1fd01f" stroke-width="1.050" stroke-dasharray="1.500 0.600 2 0.500"/><path d="M702.500 237.9v2H721.500v-2" stroke="#2030e8" stroke-width="0.700" fill="none"/><path d="M668.2 243.2h1.9" stroke="#1fd01f" stroke-width="1.050" stroke-dasharray="1.200 0.600 1.800 0.500"/><path d="M672.5 243.2h3.6" stroke="#1fd01f" stroke-width="1.050" stroke-dasharray="1.200 0.600 1.800 0.500"/><path d="M679 243.2h2.6" stroke="#1fd01f" stroke-width="1.050" stroke-dasharray="1.200 0.600 1.800 0.500"/><path d="M684.5 243.2h4.1" stroke="#1fd01f" stroke-width="1.050" stroke-dasharray="1.200 0.600 1.800 0.500"/><path d="M736 243.2h3.2" stroke="#1fd01f" stroke-width="1.050" stroke-dasharray="1.200 0.600 1.800 0.500"/><path d="M743 243.2h3.9" stroke="#1fd01f" stroke-width="1.050" stroke-dasharray="1.200 0.600 1.800 0.500"/><path d="M749.5 243.2h4.3" stroke="#1fd01f" stroke-width="1.050" stroke-dasharray="1.200 0.600 1.800 0.500"/><path d="M697 243.2h5M707.500 243.2h6M722 243.2h4.500" stroke="#1fd01f" stroke-width="1.050" stroke-dasharray="1.500 0.600 2 0.500"/><path d="M702.500 243.2v2H721.500v-2" stroke="#2030e8" stroke-width="0.700" fill="none"/><path d="M707 253h7" stroke="#2838f0" stroke-width="1" stroke-dasharray="2 0.500"/><path d="M668.2 258h1.8" stroke="#1fd01f" stroke-width="1.050" stroke-dasharray="1.200 0.600 1.800 0.500"/><path d="M672.5 258h4.1" stroke="#1fd01f" stroke-width="1.050" stroke-dasharray="1.200 0.600 1.800 0.500"/><path d="M679 258h2.4" stroke="#1fd01f" stroke-width="1.050" stroke-dasharray="1.200 0.600 1.800 0.500"/><path d="M684.5 258h3.0" stroke="#1fd01f" stroke-width="1.050" stroke-dasharray="1.200 0.600 1.800 0.500"/><path d="M736 258h4.6" stroke="#1fd01f" stroke-width="1.050" stroke-dasharray="1.200 0.600 1.800 0.500"/><path d="M743 258h3.3" stroke="#1fd01f" stroke-width="1.050" stroke-dasharray="1.200 0.600 1.800 0.500"/><path d="M749.5 258h4.1" stroke="#1fd01f" stroke-width="1.050" stroke-dasharray="1.200 0.600 1.800 0.500"/><path d="M697 258h5M707.500 258h6M722 258h4.500" stroke="#1fd01f" stroke-width="1.050" stroke-dasharray="1.500 0.600 2 0.500"/><path d="M702.500 258v2H721.500v-2" stroke="#2030e8" stroke-width="0.700" fill="none"/><path d="M668.2 263h2.0" stroke="#1fd01f" stroke-width="1.050" stroke-dasharray="1.200 0.600 1.800 0.500"/><path d="M672.5 263h3.4" stroke="#1fd01f" stroke-width="1.050" stroke-dasharray="1.200 0.600 1.800 0.500"/><path d="M679 263h2.3" stroke="#1fd01f" stroke-width="1.050" stroke-dasharray="1.200 0.600 1.800 0.500"/><path d="M684.5 263h4.4" stroke="#1fd01f" stroke-width="1.050" stroke-dasharray="1.200 0.600 1.800 0.500"/><path d="M736 263h4.4" stroke="#1fd01f" stroke-width="1.050" stroke-dasharray="1.200 0.600 1.800 0.500"/><path d="M743 263h3.0" stroke="#1fd01f" stroke-width="1.050" stroke-dasharray="1.200 0.600 1.800 0.500"/><path d="M749.5 263h2.9" stroke="#1fd01f" stroke-width="1.050" stroke-dasharray="1.200 0.600 1.800 0.500"/><path d="M697 263h5M707.500 263h6M722 263h4.500" stroke="#1fd01f" stroke-width="1.050" stroke-dasharray="1.500 0.600 2 0.500"/><path d="M702.500 263v2H721.500v-2" stroke="#2030e8" stroke-width="0.700" fill="none"/><path d="M759 108V136M759 238V262" stroke="#2838f0" stroke-width="1.200" stroke-dasharray="1.500 0.600 2.500 0.500"/></svg>
<div class="r" style="left:773px;top:64px;width:27px;height:173px;background:#ebebeb;box-shadow:-0.300px -0.300px 0 0.300px #d6d6d6"></div>
<div class="r" style="left:773px;top:64px;width:27px;height:14px;background:#ececec;"></div>
<div class="r" style="left:776.6px;top:78.5px;width:24px;height:156px;background:#f3f3f3;"></div>
<div class="t" style="left:785.00px;top:86.14px;font-size:5.9px;line-height:7.9px;color:#222;letter-spacing:-0.202px;">Resultados</div>
<div class="r" style="left:789px;top:99px;width:11px;height:8px;background:linear-gradient(#f9d89a,#f3bd5c);border:0.500px solid #c9a050;box-sizing:border-box"></div>
<div class="r" style="left:789px;top:107px;width:11px;height:7px;background:#fff;border:0.600px solid #777;box-sizing:border-box"></div>
<div class="t" style="left:790.30px;top:107.57px;font-size:5.5px;line-height:7.5px;color:#111;letter-spacing:0.000px;">1</div>
<div class="r" style="left:789px;top:116.5px;width:11px;height:39px;background:#b4b4b4;border:0.600px solid #888;box-sizing:border-box"></div>
<div class="r" style="left:789.5px;top:117px;width:10.5px;height:7px;background:linear-gradient(#f4f8fc,#d4e2f0);"></div>
<div class="r" style="left:789.5px;top:124px;width:10.5px;height:15px;background:#fff;"></div>
<div class="t" style="left:790.00px;top:124.34px;font-size:5.9px;line-height:7.9px;color:#222;letter-spacing:-0.183px;">Persistente</div>
<div class="t" style="left:790.00px;top:132.74px;font-size:5.9px;line-height:7.9px;color:#222;letter-spacing:-0.183px;">Persistente</div>
<div class="t" style="left:784.50px;top:169.84px;font-size:5.9px;line-height:7.9px;color:#222;letter-spacing:-0.219px;">Observaciones</div>
<div class="r" style="left:789px;top:181.5px;width:11px;height:27px;background:#fff;border:0.600px solid #888;box-sizing:border-box"></div>
<div class="r" style="left:781.2px;top:216.4px;width:19px;height:10px;background:#e9e9e9;border:0.600px solid #c4c4c4;box-sizing:border-box;border-radius:1px"></div>
<svg class="r" style="left:790px;top:217px" width="10" height="9" viewBox="0 0 10 9"><path d="M1.500 1.200l2 1.200-1.300 0.600z" fill="#222"/><rect x="1.800" y="4" width="3" height="2.500" fill="#d0d0d0"/><rect x="6.500" y="1.500" width="5" height="5.500" fill="#e4e4e4" stroke="#555" stroke-width="0.700"/></svg>
<div class="r" style="left:20px;top:8px;width:459px;height:318px;background:#ebebeb;box-shadow:0 0 0 0.5px #d4d4d4"></div>
<div class="t" style="left:240.40px;top:10.98px;font-size:7.2px;line-height:9.2px;color:#333;letter-spacing:-0.323px;">caso1</div>
<svg class="r" style="left:24px;top:11px" width="9" height="9" viewBox="0 0 9 9"><rect x="0.500" y="0.500" width="7" height="7.500" fill="#f4f4f4" stroke="#888" stroke-width="0.8"/><path d="M3 0.500v5H0.500" stroke="#999" stroke-width="0.6" fill="none"/></svg>
<div class="r" style="left:455px;top:8px;width:21px;height:9px;background:#c4c4c4;"></div>
<svg class="r" style="left:428px;top:8px" width="50" height="10" viewBox="0 0 50 10"><rect x="7" y="5.500" width="3.500" height="1.100" fill="#333"/><rect x="18.500" y="2.500" width="4.500" height="3.800" fill="#fff" stroke="#222" stroke-width="0.9"/><rect x="18.500" y="2.300" width="4.500" height="1" fill="#222"/><path d="M35.800 2.500l3.400 3.600M39.200 2.500l-3.400 3.600" stroke="#fff" stroke-width="1.100"/></svg>
<div class="r" style="left:24px;top:23px;width:187.2px;height:166px;background:#fffff1;"></div>
<div class="r" style="left:202.4px;top:23px;width:8.8px;height:166px;background:#f1f1f1;"></div>
<div class="r" style="left:203px;top:45px;width:7.6px;height:127.8px;background:#cdcdcd;"></div>
<svg class="r" style="left:202.8px;top:23px" width="8" height="166" viewBox="0 0 8 166"><path d="M2 5.500l2-2 2 2M1.800 160.200l2 2 2-2" stroke="#555" stroke-width="0.8" fill="none"/></svg>
<div class="r" style="left:24px;top:188.8px;width:187.2px;height:10.7px;background:#f1f1f1;"></div>
<div class="r" style="left:33px;top:189.5px;width:7px;height:9px;background:#cdcdcd;"></div>
<svg class="r" style="left:24px;top:187.5px" width="187" height="9" viewBox="0 0 187 9"><path d="M5.500 2.700l-2 2 2 2M173 2.700l2 2-2 2" stroke="#555" stroke-width="0.8" fill="none"/></svg>
<div class="t" style="left:45.10px;top:24.57px;font-size:5.85px;line-height:7.85px;color:#1a1a1a;letter-spacing:-0.241px;">Entrada</div>
<div class="t" style="left:54.30px;top:33.15px;font-size:5.85px;line-height:7.85px;color:#1a1a1a;letter-spacing:-0.204px;">Geometría</div>
<div class="t" style="left:54.30px;top:41.73px;font-size:5.85px;line-height:7.85px;color:#1a1a1a;letter-spacing:-0.119px;">Terreno</div>
<div class="t" style="left:54.30px;top:50.31px;font-size:5.85px;line-height:7.85px;color:#1a1a1a;letter-spacing:-0.169px;">Materiales</div>
<div class="t" style="left:54.30px;top:58.89px;font-size:5.85px;line-height:7.85px;color:#1a1a1a;letter-spacing:-0.194px;">Clases de exposición</div>
<div class="t" style="left:54.30px;top:67.47px;font-size:5.85px;line-height:7.85px;color:#1a1a1a;letter-spacing:-0.169px;">Fisuración</div>
<div class="t" style="left:54.30px;top:76.05px;font-size:5.85px;line-height:7.85px;color:#1a1a1a;letter-spacing:-0.155px;">Acciones</div>
<div class="t" style="left:54.30px;top:84.63px;font-size:5.85px;line-height:7.85px;color:#1a1a1a;letter-spacing:-0.114px;">Coeficientes de mayoración de acciones</div>
<div class="t" style="left:54.30px;top:93.21px;font-size:5.85px;line-height:7.85px;color:#1a1a1a;letter-spacing:-0.081px;">Coeficientes de seguridad y combinación</div>
<div class="t" style="left:54.30px;top:101.79px;font-size:5.85px;line-height:7.85px;color:#1a1a1a;letter-spacing:-0.086px;">Armadura</div>
<div class="t" style="left:54.30px;top:110.37px;font-size:5.85px;line-height:7.85px;color:#1a1a1a;letter-spacing:-0.039px;">Configuración del cálculo</div>
<div class="t" style="left:54.30px;top:118.95px;font-size:5.85px;line-height:7.85px;color:#1a1a1a;letter-spacing:-0.059px;">Configuración Estabilidad global</div>
<div class="t" style="left:54.30px;top:127.53px;font-size:5.85px;line-height:7.85px;color:#1a1a1a;letter-spacing:-0.098px;">Activación de cálculos</div>
<div class="t" style="left:45.10px;top:136.11px;font-size:5.85px;line-height:7.85px;color:#1a1a1a;letter-spacing:-0.170px;">Análisis</div>
<div class="t" style="left:45.10px;top:144.69px;font-size:5.85px;line-height:7.85px;color:#1a1a1a;letter-spacing:-0.294px;">Salida</div>
<div class="t" style="left:54.30px;top:153.27px;font-size:5.85px;line-height:7.85px;color:#1a1a1a;letter-spacing:-0.090px;">Memoria de cálculo</div>
<div class="t" style="left:54.30px;top:161.85px;font-size:5.85px;line-height:7.85px;color:#1a1a1a;letter-spacing:-0.231px;">Planos</div>
<div class="t" style="left:63.50px;top:170.43px;font-size:5.85px;line-height:7.85px;color:#1a1a1a;letter-spacing:-0.078px;">Planos de definición geométrica</div>
<div class="t" style="left:63.50px;top:179.01px;font-size:5.85px;line-height:7.85px;color:#1a1a1a;letter-spacing:-0.182px;">Planos de armadura</div>
<svg class="r" style="left:0;top:0" width="220" height="200" viewBox="0 0 220 200"><path d="M39.500 24V148.12M48.500 32V130.96M48.500 152.12V165.28M57.500 169.28V182.44M39.5 28.00H43.6M48.5 36.58H52.8M48.5 45.16H52.8M48.5 53.74H52.8M48.5 62.32H52.8M48.5 70.90H52.8M48.5 79.48H52.8M48.5 88.06H52.8M48.5 96.64H52.8M48.5 105.22H52.8M48.5 113.80H52.8M48.5 122.38H52.8M48.5 130.96H52.8M39.5 139.54H43.6M39.5 148.12H43.6M48.5 156.70H52.8M48.5 165.28H52.8M57.5 173.86H62.0M57.5 182.44H62.0" stroke="#a9afc8" stroke-width="0.7" fill="none"/><rect x="37.20" y="25.70" width="4.600" height="4.600" rx="0.5" fill="#eceef5" stroke="#a4aac4" stroke-width="0.6"/><path d="M38.20 28.00h2.600" stroke="#4a4f6a" stroke-width="0.6"/><rect x="46.20" y="34.28" width="4.600" height="4.600" rx="0.5" fill="#eceef5" stroke="#a4aac4" stroke-width="0.6"/><path d="M47.20 36.58h2.600" stroke="#4a4f6a" stroke-width="0.6"/><path d="M48.50 35.28v2.600" stroke="#4a4f6a" stroke-width="0.6"/><rect x="46.20" y="77.18" width="4.600" height="4.600" rx="0.5" fill="#eceef5" stroke="#a4aac4" stroke-width="0.6"/><path d="M47.20 79.48h2.600" stroke="#4a4f6a" stroke-width="0.6"/><path d="M48.50 78.18v2.600" stroke="#4a4f6a" stroke-width="0.6"/><rect x="46.20" y="102.92" width="4.600" height="4.600" rx="0.5" fill="#eceef5" stroke="#a4aac4" stroke-width="0.6"/><path d="M47.20 105.22h2.600" stroke="#4a4f6a" stroke-width="0.6"/><path d="M48.50 103.92v2.600" stroke="#4a4f6a" stroke-width="0.6"/><rect x="37.20" y="137.24" width="4.600" height="4.600" rx="0.5" fill="#eceef5" stroke="#a4aac4" stroke-width="0.6"/><path d="M38.20 139.54h2.600" stroke="#4a4f6a" stroke-width="0.6"/><path d="M39.50 138.24v2.600" stroke="#4a4f6a" stroke-width="0.6"/><rect x="37.20" y="145.82" width="4.600" height="4.600" rx="0.5" fill="#eceef5" stroke="#a4aac4" stroke-width="0.6"/><path d="M38.20 148.12h2.600" stroke="#4a4f6a" stroke-width="0.6"/><rect x="46.20" y="162.98" width="4.600" height="4.600" rx="0.5" fill="#eceef5" stroke="#a4aac4" stroke-width="0.6"/><path d="M47.20 165.28h2.600" stroke="#4a4f6a" stroke-width="0.6"/><rect x="55.20" y="171.56" width="4.600" height="4.600" rx="0.5" fill="#eceef5" stroke="#a4aac4" stroke-width="0.6"/><path d="M56.20 173.86h2.600" stroke="#4a4f6a" stroke-width="0.6"/><path d="M57.50 172.56v2.600" stroke="#4a4f6a" stroke-width="0.6"/><rect x="55.20" y="180.14" width="4.600" height="4.600" rx="0.5" fill="#eceef5" stroke="#a4aac4" stroke-width="0.6"/><path d="M56.20 182.44h2.600" stroke="#4a4f6a" stroke-width="0.6"/><path d="M57.50 181.14v2.600" stroke="#4a4f6a" stroke-width="0.6"/></svg>
<div class="r" style="left:24px;top:199.5px;width:189.5px;height:105px;background:#ffffff;border:1px solid #ababab;box-sizing:border-box"></div>
<div class="r" style="left:25px;top:200.5px;width:187.5px;height:10.5px;background:#fbfbfb;"></div>
<div class="r" style="left:25px;top:211px;width:188px;height:0.5px;background:#ececec;"></div>
<div class="r" style="left:56px;top:200.5px;width:0.5px;height:103px;background:#f2f2f2;"></div>
<div class="r" style="left:67px;top:200.5px;width:0.5px;height:103px;background:#f2f2f2;"></div>
<div class="r" style="left:119px;top:200.5px;width:0.5px;height:103px;background:#f0f0f0;"></div>
<div class="r" style="left:28.9px;top:202.4px;width:25.7px;height:7.2px;background:linear-gradient(#d8d8d8,#ababab);border:0.7px solid #5c5c5c;box-sizing:border-box;border-radius:1.2px"></div>
<div class="t" style="left:31.30px;top:203.40px;font-size:4.1px;line-height:6.1px;color:#111;letter-spacing:-0.109px;">CALCULAR</div>
<div class="t" style="left:69.40px;top:201.87px;font-size:5.85px;line-height:7.85px;color:#1e1e1e;letter-spacing:-0.238px;">Elementos</div>
<div class="t" style="left:121.90px;top:201.87px;font-size:5.85px;line-height:7.85px;color:#1e1e1e;letter-spacing:-0.085px;">Verificación</div>
<div class="r" style="left:29px;top:212.8px;width:26.3px;height:7.8px;background:linear-gradient(#d8d8d8,#ababab);border:0.7px solid #5c5c5c;box-sizing:border-box;border-radius:1.2px"></div>
<div class="t" style="left:31.10px;top:213.80px;font-size:5.8px;line-height:7.8px;color:#111;letter-spacing:-0.303px;">Consultar</div>
<svg class="r" style="left:57px;top:212.5px" width="10" height="9" viewBox="0 0 10 9"><rect x="0.800" y="0.800" width="7.800" height="7.600" fill="#c4c4c4"/><path d="M0.800 8.400V0.800h7.800" stroke="#ececec" stroke-width="0.600" fill="none"/><path d="M8.600 0.800v7.600H0.800" stroke="#8a8a8a" stroke-width="0.600" fill="none"/><path d="M2.600 5.200l1.900 2.500L8.300 1.800" stroke="#1a6a1a" stroke-width="1.900" fill="none" opacity="0.550"/><path d="M2.200 4.700l1.900 2.500L7.900 1.300" stroke="#22dc22" stroke-width="1.700" fill="none"/></svg>
<div class="t" style="left:69.40px;top:213.77px;font-size:5.85px;line-height:7.85px;color:#1e1e1e;letter-spacing:-0.164px;">Todos los módul...</div>
<div class="t" style="left:121.90px;top:213.77px;font-size:5.85px;line-height:7.85px;color:#1e1e1e;letter-spacing:-0.174px;">EL Deslizamiento zapata - terreno</div>
<div class="r" style="left:29px;top:221.8px;width:26.3px;height:7.8px;background:linear-gradient(#d8d8d8,#ababab);border:0.7px solid #5c5c5c;box-sizing:border-box;border-radius:1.2px"></div>
<div class="t" style="left:31.10px;top:222.80px;font-size:5.8px;line-height:7.8px;color:#111;letter-spacing:-0.303px;">Consultar</div>
<svg class="r" style="left:57px;top:221.5px" width="10" height="9" viewBox="0 0 10 9"><rect x="0.800" y="0.800" width="7.800" height="7.600" fill="#c4c4c4"/><path d="M0.800 8.400V0.800h7.800" stroke="#ececec" stroke-width="0.600" fill="none"/><path d="M8.600 0.800v7.600H0.800" stroke="#8a8a8a" stroke-width="0.600" fill="none"/><path d="M2.600 5.200l1.900 2.500L8.300 1.800" stroke="#1a6a1a" stroke-width="1.900" fill="none" opacity="0.550"/><path d="M2.200 4.700l1.900 2.500L7.900 1.300" stroke="#22dc22" stroke-width="1.700" fill="none"/></svg>
<div class="t" style="left:69.40px;top:222.77px;font-size:5.85px;line-height:7.85px;color:#1e1e1e;letter-spacing:-0.164px;">Todos los módul...</div>
<div class="t" style="left:121.90px;top:222.77px;font-size:5.85px;line-height:7.85px;color:#1e1e1e;letter-spacing:-0.150px;">EL Vuelco rígido</div>
<div class="r" style="left:29px;top:230.8px;width:26.3px;height:7.8px;background:linear-gradient(#d8d8d8,#ababab);border:0.7px solid #5c5c5c;box-sizing:border-box;border-radius:1.2px"></div>
<div class="t" style="left:31.10px;top:231.80px;font-size:5.8px;line-height:7.8px;color:#111;letter-spacing:-0.303px;">Consultar</div>
<svg class="r" style="left:57px;top:230.5px" width="10" height="9" viewBox="0 0 10 9"><rect x="0.800" y="0.800" width="7.800" height="7.600" fill="#c4c4c4"/><path d="M0.800 8.400V0.800h7.800" stroke="#ececec" stroke-width="0.600" fill="none"/><path d="M8.600 0.800v7.600H0.800" stroke="#8a8a8a" stroke-width="0.600" fill="none"/><path d="M2.600 5.200l1.900 2.500L8.300 1.800" stroke="#1a6a1a" stroke-width="1.900" fill="none" opacity="0.550"/><path d="M2.200 4.700l1.900 2.500L7.900 1.300" stroke="#22dc22" stroke-width="1.700" fill="none"/></svg>
<div class="t" style="left:69.40px;top:231.77px;font-size:5.85px;line-height:7.85px;color:#1e1e1e;letter-spacing:-0.164px;">Todos los módul...</div>
<div class="t" style="left:121.90px;top:231.77px;font-size:5.85px;line-height:7.85px;color:#1e1e1e;letter-spacing:-0.102px;">ELU Hundimiento del terreno</div>
<div class="r" style="left:29px;top:239.8px;width:26.3px;height:7.8px;background:linear-gradient(#d8d8d8,#ababab);border:0.7px solid #5c5c5c;box-sizing:border-box;border-radius:1.2px"></div>
<div class="t" style="left:31.10px;top:240.80px;font-size:5.8px;line-height:7.8px;color:#111;letter-spacing:-0.303px;">Consultar</div>
<svg class="r" style="left:57px;top:239.5px" width="10" height="9" viewBox="0 0 10 9"><rect x="0.800" y="0.800" width="7.800" height="7.600" fill="#c4c4c4"/><path d="M0.800 8.400V0.800h7.800" stroke="#ececec" stroke-width="0.600" fill="none"/><path d="M8.600 0.800v7.600H0.800" stroke="#8a8a8a" stroke-width="0.600" fill="none"/><path d="M2.600 5.200l1.900 2.500L8.300 1.800" stroke="#1a6a1a" stroke-width="1.900" fill="none" opacity="0.550"/><path d="M2.200 4.700l1.900 2.500L7.900 1.300" stroke="#22dc22" stroke-width="1.700" fill="none"/></svg>
<div class="t" style="left:69.40px;top:240.77px;font-size:5.85px;line-height:7.85px;color:#1e1e1e;letter-spacing:-0.164px;">Todos los módul...</div>
<div class="t" style="left:121.90px;top:240.77px;font-size:5.85px;line-height:7.85px;color:#1e1e1e;letter-spacing:-0.185px;">ELU Rotura por flexión</div>
<div class="r" style="left:29px;top:248.8px;width:26.3px;height:7.8px;background:linear-gradient(#d8d8d8,#ababab);border:0.7px solid #5c5c5c;box-sizing:border-box;border-radius:1.2px"></div>
<div class="t" style="left:31.10px;top:249.80px;font-size:5.8px;line-height:7.8px;color:#111;letter-spacing:-0.303px;">Consultar</div>
<svg class="r" style="left:57px;top:248.5px" width="10" height="9" viewBox="0 0 10 9"><rect x="0.800" y="0.800" width="7.800" height="7.600" fill="#c4c4c4"/><path d="M0.800 8.400V0.800h7.800" stroke="#ececec" stroke-width="0.600" fill="none"/><path d="M8.600 0.800v7.600H0.800" stroke="#8a8a8a" stroke-width="0.600" fill="none"/><path d="M2.600 5.200l1.900 2.500L8.300 1.800" stroke="#1a6a1a" stroke-width="1.900" fill="none" opacity="0.550"/><path d="M2.200 4.700l1.900 2.500L7.900 1.300" stroke="#22dc22" stroke-width="1.700" fill="none"/></svg>
<div class="t" style="left:69.40px;top:249.77px;font-size:5.85px;line-height:7.85px;color:#1e1e1e;letter-spacing:-0.164px;">Todos los módul...</div>
<div class="t" style="left:121.90px;top:249.77px;font-size:5.85px;line-height:7.85px;color:#1e1e1e;letter-spacing:-0.348px;">ELS Fisuración</div>
<div class="r" style="left:29px;top:257.8px;width:26.3px;height:7.8px;background:linear-gradient(#d8d8d8,#ababab);border:0.7px solid #5c5c5c;box-sizing:border-box;border-radius:1.2px"></div>
<div class="t" style="left:31.10px;top:258.80px;font-size:5.8px;line-height:7.8px;color:#111;letter-spacing:-0.303px;">Consultar</div>
<svg class="r" style="left:57px;top:257.5px" width="10" height="9" viewBox="0 0 10 9"><rect x="0.800" y="0.800" width="7.800" height="7.600" fill="#c4c4c4"/><path d="M0.800 8.400V0.800h7.800" stroke="#ececec" stroke-width="0.600" fill="none"/><path d="M8.600 0.800v7.600H0.800" stroke="#8a8a8a" stroke-width="0.600" fill="none"/><path d="M2.600 5.200l1.900 2.500L8.300 1.800" stroke="#1a6a1a" stroke-width="1.900" fill="none" opacity="0.550"/><path d="M2.200 4.700l1.900 2.500L7.900 1.300" stroke="#22dc22" stroke-width="1.700" fill="none"/></svg>
<div class="t" style="left:69.40px;top:258.77px;font-size:5.85px;line-height:7.85px;color:#1e1e1e;letter-spacing:-0.164px;">Todos los módul...</div>
<div class="t" style="left:121.90px;top:258.77px;font-size:5.85px;line-height:7.85px;color:#1e1e1e;letter-spacing:-0.166px;">ELU Rotura por cortante</div>
<div class="r" style="left:29px;top:266.8px;width:26.3px;height:7.8px;background:linear-gradient(#d8d8d8,#ababab);border:0.7px solid #5c5c5c;box-sizing:border-box;border-radius:1.2px"></div>
<div class="t" style="left:31.10px;top:267.80px;font-size:5.8px;line-height:7.8px;color:#111;letter-spacing:-0.303px;">Consultar</div>
<svg class="r" style="left:57px;top:266.5px" width="10" height="9" viewBox="0 0 10 9"><rect x="0.800" y="0.800" width="7.800" height="7.600" fill="#c4c4c4"/><path d="M0.800 8.400V0.800h7.800" stroke="#ececec" stroke-width="0.600" fill="none"/><path d="M8.600 0.800v7.600H0.800" stroke="#8a8a8a" stroke-width="0.600" fill="none"/><path d="M2.600 5.200l1.900 2.500L8.300 1.800" stroke="#1a6a1a" stroke-width="1.900" fill="none" opacity="0.550"/><path d="M2.200 4.700l1.900 2.500L7.900 1.300" stroke="#22dc22" stroke-width="1.700" fill="none"/></svg>
<div class="t" style="left:69.40px;top:267.77px;font-size:5.85px;line-height:7.85px;color:#1e1e1e;letter-spacing:-0.164px;">Todos los módul...</div>
<div class="t" style="left:121.90px;top:267.77px;font-size:5.85px;line-height:7.85px;color:#1e1e1e;letter-spacing:-0.572px;">ELS Deformaciones</div>
<div class="r" style="left:29px;top:275.8px;width:26.3px;height:7.8px;background:linear-gradient(#d8d8d8,#ababab);border:0.7px solid #5c5c5c;box-sizing:border-box;border-radius:1.2px"></div>
<div class="t" style="left:31.10px;top:276.80px;font-size:5.8px;line-height:7.8px;color:#111;letter-spacing:-0.303px;">Consultar</div>
<svg class="r" style="left:57px;top:275.5px" width="10" height="9" viewBox="0 0 10 9"><rect x="0.800" y="0.800" width="7.800" height="7.600" fill="#c4c4c4"/><path d="M0.800 8.400V0.800h7.800" stroke="#ececec" stroke-width="0.600" fill="none"/><path d="M8.600 0.800v7.600H0.800" stroke="#8a8a8a" stroke-width="0.600" fill="none"/><path d="M2.600 5.200l1.900 2.500L8.300 1.800" stroke="#1a6a1a" stroke-width="1.900" fill="none" opacity="0.550"/><path d="M2.200 4.700l1.900 2.500L7.900 1.300" stroke="#22dc22" stroke-width="1.700" fill="none"/></svg>
<div class="t" style="left:69.40px;top:276.77px;font-size:5.85px;line-height:7.85px;color:#1e1e1e;letter-spacing:-0.164px;">Todos los módul...</div>
<div class="t" style="left:121.90px;top:276.77px;font-size:5.85px;line-height:7.85px;color:#1e1e1e;letter-spacing:-0.163px;">EL Estabilidad global</div>
<div class="r" style="left:29px;top:284.8px;width:26.3px;height:7.8px;background:linear-gradient(#d8d8d8,#ababab);border:0.7px solid #5c5c5c;box-sizing:border-box;border-radius:1.2px"></div>
<div class="t" style="left:31.10px;top:285.80px;font-size:5.8px;line-height:7.8px;color:#111;letter-spacing:-0.303px;">Consultar</div>
<svg class="r" style="left:57px;top:284.5px" width="10" height="9" viewBox="0 0 10 9"><rect x="0.800" y="0.800" width="7.800" height="7.600" fill="#c4c4c4"/><path d="M0.800 8.400V0.800h7.800" stroke="#ececec" stroke-width="0.600" fill="none"/><path d="M8.600 0.800v7.600H0.800" stroke="#8a8a8a" stroke-width="0.600" fill="none"/><path d="M2.600 5.200l1.900 2.500L8.300 1.800" stroke="#1a6a1a" stroke-width="1.900" fill="none" opacity="0.550"/><path d="M2.200 4.700l1.900 2.500L7.900 1.300" stroke="#22dc22" stroke-width="1.700" fill="none"/></svg>
<div class="t" style="left:69.40px;top:285.77px;font-size:5.85px;line-height:7.85px;color:#1e1e1e;letter-spacing:-0.164px;">Todos los módul...</div>
<div class="t" style="left:121.90px;top:285.77px;font-size:5.85px;line-height:7.85px;color:#1e1e1e;letter-spacing:-0.164px;">Generación del armado</div>
<div class="r" style="left:212.3px;top:23px;width:0.8px;height:282px;background:#c4c4c4;"></div>
<div class="r" style="left:214.7px;top:23px;width:0.8px;height:282px;background:#c9c9c9;"></div>
<div class="r" style="left:216px;top:23px;width:259px;height:281px;background:#ffffff;box-shadow:0 0 0 0.500px #cfcfcf"></div>
<svg class="r" style="left:216px;top:23px" width="259" height="281" viewBox="216 23 259 281"><defs>
    <linearGradient id="gw1" gradientUnits="userSpaceOnUse" x1="250" y1="165" x2="287" y2="165"><stop offset="0" stop-color="#1a1a1a"/><stop offset="0.45" stop-color="#7e7e7e"/><stop offset="0.8" stop-color="#4a4a4a"/><stop offset="1" stop-color="#1e1e1e"/></linearGradient>
    <linearGradient id="gw2" gradientUnits="userSpaceOnUse" x1="296" y1="140" x2="350" y2="200"><stop offset="0" stop-color="#050505"/><stop offset="0.25" stop-color="#333"/><stop offset="0.5" stop-color="#8e8e8e"/><stop offset="0.72" stop-color="#666"/><stop offset="1" stop-color="#1c1c1c"/></linearGradient>
    <linearGradient id="gw3" gradientUnits="userSpaceOnUse" x1="366" y1="165" x2="440" y2="200"><stop offset="0" stop-color="#b8b8b8"/><stop offset="0.2" stop-color="#c4c4c4"/><stop offset="0.6" stop-color="#3c3c3c"/><stop offset="1" stop-color="#060606"/></linearGradient>
    <linearGradient id="gft" x1="0" y1="0" x2="0" y2="1"><stop offset="0" stop-color="#3a3a3a"/><stop offset="1" stop-color="#6e6e6e"/></linearGradient>
    <linearGradient id="gff" x1="0" y1="0" x2="0" y2="1"><stop offset="0" stop-color="#d8d8d8"/><stop offset="0.6" stop-color="#bdbdbd"/><stop offset="1" stop-color="#8a8a8a"/></linearGradient>
    </defs><polygon points="247.8,178.5 286.2,186.3 285.7,193.8 247.5,185.5" fill="url(#gff)" stroke="#777" stroke-width="0.3"/><polygon points="247.8,173.5 286.2,181.3 286.2,186.9 247.8,179.1" fill="url(#gft)"/><polygon points="286.2,186.3 365.0,197.5 364.5,205.0 285.9,193.3" fill="url(#gff)" stroke="#777" stroke-width="0.3"/><polygon points="286.2,181.3 365.0,192.5 365.0,198.1 286.2,186.9" fill="url(#gft)"/><polygon points="365.0,197.5 447.6,209.8 447.1,217.3 364.7,204.5" fill="url(#gff)" stroke="#777" stroke-width="0.3"/><polygon points="365.0,192.5 447.6,204.8 447.6,210.4 365.0,198.1" fill="url(#gft)"/><polygon points="250.3,158.5 284.2,147.8 286.2,181.3 250.3,173.5" fill="url(#gw1)"/><polygon points="284.2,147.8 367.3,150.0 365.0,192.5 286.2,181.3" fill="url(#gw2)"/><polygon points="367.3,150.0 449.0,190.3 447.6,204.8 365.0,192.5" fill="url(#gw3)"/><path d="M284.2 147.8L286.2 181.3l-0.5 12M367.3 150L365 192.5l-0.5 12" stroke="#8a8a8a" stroke-width="0.5" fill="none"/><polygon points="281.3,80.6 313.5,66.8 284.2,147.8 250.3,158.5" fill="#ef981f" stroke="#3a2508" stroke-width="0.5"/><path d="M284.0 79.4L253.1 157.6M286.7 78.3L256.0 156.7M289.4 77.1L258.8 155.8M292.0 76.0L261.6 154.9M294.7 74.8L264.4 154.0M297.4 73.7L267.2 153.2M300.1 72.5L270.1 152.3M302.8 71.4L272.9 151.4M305.4 70.2L275.7 150.5M308.1 69.1L278.6 149.6M310.8 68.0L281.4 148.7" stroke="#3a2204" stroke-width="0.5" fill="none" opacity="0.9"/><path d="M280.3 83.2L312.5 69.5M279.2 85.8L311.5 72.2M278.2 88.4L310.6 74.9M277.2 91.0L309.6 77.6M276.1 93.6L308.6 80.3M275.1 96.2L307.6 83.0M274.1 98.8L306.7 85.7M273.0 101.4L305.7 88.4M272.0 104.0L304.7 91.1M271.0 106.6L303.7 93.8M269.9 109.2L302.8 96.5M268.9 111.8L301.8 99.2M267.9 114.4L300.8 101.9M266.8 117.0L299.8 104.6M265.8 119.5L298.9 107.3M264.8 122.1L297.9 110.0M263.7 124.7L296.9 112.7M262.7 127.3L295.9 115.4M261.7 129.9L294.9 118.1M260.6 132.5L294.0 120.8M259.6 135.1L293.0 123.5M258.6 137.7L292.0 126.2M257.5 140.3L291.0 128.9M256.5 142.9L290.1 131.6M255.5 145.5L289.1 134.3M254.4 148.1L288.1 137.0M253.4 150.7L287.1 139.7M252.4 153.3L286.2 142.4M251.3 155.9L285.2 145.1" stroke="#2e1a02" stroke-width="0.5" fill="none" opacity="0.9"/><polygon points="313.5,66.8 387.5,63.5 367.3,150.0 284.2,147.8" fill="#f5a021" stroke="#3a2508" stroke-width="0.5"/><path d="M320.2 66.5L291.8 148.0M327.0 66.2L299.3 148.2M333.7 65.9L306.9 148.4M340.4 65.6L314.4 148.6M347.1 65.3L322.0 148.8M353.9 65.0L329.5 149.0M360.6 64.7L337.1 149.2M367.3 64.4L344.6 149.4M374.0 64.1L352.2 149.6M380.8 63.8L359.7 149.8" stroke="#3a2204" stroke-width="0.5" fill="none" opacity="0.9"/><path d="M312.5 69.5L386.8 66.4M311.5 72.2L386.2 69.3M310.6 74.9L385.5 72.2M309.6 77.6L384.8 75.0M308.6 80.3L384.1 77.9M307.6 83.0L383.5 80.8M306.7 85.7L382.8 83.7M305.7 88.4L382.1 86.6M304.7 91.1L381.4 89.5M303.7 93.8L380.8 92.3M302.8 96.5L380.1 95.2M301.8 99.2L379.4 98.1M300.8 101.9L378.7 101.0M299.8 104.6L378.1 103.9M298.9 107.3L377.4 106.8M297.9 110.0L376.7 109.6M296.9 112.7L376.1 112.5M295.9 115.4L375.4 115.4M294.9 118.1L374.7 118.3M294.0 120.8L374.0 121.2M293.0 123.5L373.4 124.0M292.0 126.2L372.7 126.9M291.0 128.9L372.0 129.8M290.1 131.6L371.3 132.7M289.1 134.3L370.7 135.6M288.1 137.0L370.0 138.5M287.1 139.7L369.3 141.4M286.2 142.4L368.6 144.2M285.2 145.1L368.0 147.1" stroke="#2e1a02" stroke-width="0.5" fill="none" opacity="0.9"/><polygon points="387.5,63.5 459.0,100.0 449.0,190.3 367.3,150.0" fill="#f39d20" stroke="#3a2508" stroke-width="0.5"/><path d="M394.0 66.8L374.7 153.7M400.5 70.1L382.2 157.3M407.0 73.5L389.6 161.0M413.5 76.8L397.0 164.7M420.0 80.1L404.4 168.3M426.5 83.4L411.9 172.0M433.0 86.7L419.3 175.6M439.5 90.0L426.7 179.3M446.0 93.4L434.1 183.0M452.5 96.7L441.6 186.6" stroke="#3a2204" stroke-width="0.5" fill="none" opacity="0.9"/><path d="M386.9 66.1L458.7 102.7M386.3 68.7L458.4 105.5M385.7 71.4L458.1 108.2M385.1 74.0L457.8 110.9M384.4 76.6L457.5 113.7M383.8 79.2L457.2 116.4M383.2 81.8L456.9 119.2M382.6 84.5L456.6 121.9M382.0 87.1L456.3 124.6M381.4 89.7L456.0 127.4M380.8 92.3L455.7 130.1M380.2 95.0L455.4 132.8M379.5 97.6L455.1 135.6M378.9 100.2L454.8 138.3M378.3 102.8L454.5 141.0M377.7 105.4L454.2 143.8M377.1 108.1L453.8 146.5M376.5 110.7L453.5 149.3M375.9 113.3L453.2 152.0M375.3 115.9L452.9 154.7M374.6 118.5L452.6 157.5M374.0 121.2L452.3 160.2M373.4 123.8L452.0 162.9M372.8 126.4L451.7 165.7M372.2 129.0L451.4 168.4M371.6 131.7L451.1 171.1M371.0 134.3L450.8 173.9M370.4 136.9L450.5 176.6M369.7 139.5L450.2 179.4M369.1 142.1L449.9 182.1M368.5 144.8L449.6 184.8M367.9 147.4L449.3 187.6" stroke="#2e1a02" stroke-width="0.5" fill="none" opacity="0.9"/><path d="M305 97h19M335 75h12M350 83h13M356 104h23M373 88h8M352 68h10" stroke="#5a3000" stroke-width="0.8" opacity="0.8"/></svg>
<div class="r" style="left:24px;top:305px;width:451px;height:21px;background:#f0f0f0;"></div>
<div class="r" style="left:75px;top:315px;width:400px;height:9.5px;background:#f6f6f6;"></div>
<div class="t" style="left:28.10px;top:306.27px;font-size:5.85px;line-height:7.85px;color:#222;letter-spacing:-0.210px;">Unidades: S.I.</div>
<div class="t" style="left:258.00px;top:306.27px;font-size:5.85px;line-height:7.85px;color:#222;letter-spacing:-0.111px;">Normas españolas</div>
<svg class="r" style="left:28px;top:315px" width="8" height="8" viewBox="0 0 8 8"><rect x="0.400" y="0.400" width="7.200" height="7.200" fill="#e4e4e4" stroke="#444" stroke-width="0.700"/><path d="M2.500 1.500v5M1.200 4h3.500" stroke="#c22" stroke-width="0.700"/><path d="M5 2v3.500M3.800 4.300L5 6l1.200-1.700z" stroke="#1a9a1a" stroke-width="0.800" fill="#1a9a1a"/></svg>
<svg class="r" style="left:39px;top:315px" width="8" height="8" viewBox="0 0 8 8"><rect x="0.400" y="0.400" width="7.200" height="7.200" fill="#e4e4e4" stroke="#444" stroke-width="0.700"/><path d="M2.500 1.500v5M1.200 4h3.500" stroke="#c22" stroke-width="0.700"/><path d="M5 2v3.500M3.800 4.300L5 6l1.200-1.700z" stroke="#1a9a1a" stroke-width="0.800" fill="#1a9a1a"/></svg>
<svg class="r" style="left:50px;top:315px" width="8" height="8" viewBox="0 0 8 8"><rect x="0.400" y="0.400" width="7.200" height="7.200" fill="#e4e4e4" stroke="#444" stroke-width="0.700"/><path d="M2.500 1.500v5M1.200 4h3.500" stroke="#c22" stroke-width="0.700"/><path d="M5 2v3.500M3.800 4.300L5 6l1.200-1.700z" stroke="#1a9a1a" stroke-width="0.800" fill="#1a9a1a"/></svg>
<svg class="r" style="left:61px;top:315px" width="8" height="8" viewBox="0 0 8 8"><rect x="0.400" y="0.400" width="7.200" height="7.200" fill="#e4e4e4" stroke="#444" stroke-width="0.700"/><path d="M2.500 1.500v5M1.200 4h3.500" stroke="#c22" stroke-width="0.700"/><path d="M5 2v3.500M3.800 4.300L5 6l1.200-1.700z" stroke="#1a9a1a" stroke-width="0.800" fill="#1a9a1a"/></svg>
<div class="r" style="left:73px;top:314px;width:0.6px;height:11px;background:#ccc;"></div>
<div class="r" style="left:29px;top:328.5px;width:262px;height:2.5px;background:#111;"></div>
<div class="r" style="left:14px;top:331px;width:277px;height:163px;background:#ebebeb;box-shadow:0 0 0 0.500px #cfcfcf"></div>
<div class="r" style="left:17.5px;top:333.5px;width:8px;height:8.5px;background:#f07a10;"></div>
<svg class="r" style="left:17.500px;top:333.500px" width="8" height="8.500" viewBox="0 0 8 8.500"><path d="M1.500 6V1.500L4 4.500 6.500 1.500V6" stroke="#fff" stroke-width="1.100" fill="none"/><rect x="1" y="6.800" width="6" height="0.900" fill="#ffd9a8"/></svg>
<div class="t" style="left:175.50px;top:334.28px;font-size:7.2px;line-height:9.2px;color:#333;letter-spacing:-0.158px;">Gráfica</div>
<div class="r" style="left:17px;top:345.5px;width:274px;height:12px;background:#f4f4f4;"></div>
<div class="r" style="left:31px;top:346.5px;width:0.6px;height:10px;background:#cfcfcf;"></div>
<div class="r" style="left:46.5px;top:346.5px;width:0.6px;height:10px;background:#cfcfcf;"></div>
<div class="r" style="left:60.5px;top:346.5px;width:0.6px;height:10px;background:#cfcfcf;"></div>
<div class="r" style="left:88px;top:346.5px;width:0.6px;height:10px;background:#cfcfcf;"></div>
<div class="r" style="left:157px;top:346.5px;width:0.6px;height:10px;background:#cfcfcf;"></div>
<div class="r" style="left:184px;top:346.5px;width:0.6px;height:10px;background:#cfcfcf;"></div>
<svg class="r" style="left:21px;top:347px" width="40" height="9" viewBox="0 0 40 9"><rect x="0.500" y="0.500" width="7" height="7.500" fill="#c4c4c4" stroke="#9c9c9c" stroke-width="0.700"/><rect x="2" y="0.800" width="4" height="2.800" fill="#f2f2f2"/><rect x="2" y="5.300" width="4" height="2.500" fill="#ddd"/><rect x="14.500" y="3" width="7.500" height="3.800" fill="#d4d4d4" stroke="#a8a8a8" stroke-width="0.600"/><rect x="16" y="1" width="4.500" height="2.200" fill="#eee" stroke="#999" stroke-width="0.500"/><rect x="16" y="6" width="4.500" height="2" fill="#eee" stroke="#999" stroke-width="0.500"/><rect x="29.500" y="1.500" width="4" height="4.500" fill="#ddd" stroke="#999" stroke-width="0.600"/><rect x="31.500" y="3" width="4" height="4.500" fill="#d4d4d4" stroke="#a8a8a8" stroke-width="0.600"/></svg>
<div class="t" style="left:64.50px;top:348.14px;font-size:5.9px;line-height:7.9px;color:#111;letter-spacing:-0.326px;">Modificar</div>
<div class="t" style="left:96.40px;top:349.13px;font-size:4.9px;line-height:6.9px;color:#111;letter-spacing:-0.104px;">TÍTULO</div>
<div class="t" style="left:125.60px;top:349.13px;font-size:4.9px;line-height:6.9px;color:#111;letter-spacing:-0.211px;">LEYENDA</div>
<svg class="r" style="left:118px;top:350px" width="40" height="4" viewBox="0 0 40 4"><path d="M0.500 0.500h3.400l-1.700 2.200zM32.500 0.500h3.400l-1.700 2.200z" fill="#222"/></svg>
<div class="t" style="left:162.00px;top:349.16px;font-size:4.5px;line-height:6.5px;color:#111;letter-spacing:-0.018px;">Gradación</div>
<div class="r" style="left:16.8px;top:357px;width:274px;height:124.5px;background:#fff;border-left:1px solid #8a8a8a;border-top:1px solid #777;box-sizing:border-box"></div>
<div class="r" style="left:18px;top:357.5px;width:1.6px;height:124px;background:#f4f4f4;"></div>
<div class="r" style="left:19.8px;top:357.5px;width:1.1px;height:124px;background:#3c3c3c;"></div>
<div class="t" style="left:163.90px;top:357.91px;font-size:6.3px;line-height:8.3px;color:#111;letter-spacing:-0.021px;">Estabilidad global</div>
<div class="t" style="left:125.65px;top:365.61px;font-size:5.1px;line-height:7.1px;color:#111;letter-spacing:0.007px;">Situación persistente. Combinación cuasi permanente.</div>
<div class="t" style="left:179.25px;top:372.15px;font-size:4px;line-height:6px;color:#111;letter-spacing:0.006px;">Módulo 1</div>
<svg class="r" style="left:20px;top:358px" width="270" height="123" viewBox="20 358 270 123"><defs><radialGradient id="og" cx="0.500" cy="0.450" r="0.600"><stop offset="0" stop-color="#e01010"/><stop offset="0.450" stop-color="#f06010"/><stop offset="1" stop-color="#f4c020"/></radialGradient></defs><polygon points="94,438.800 150.500,438.800 150.500,426 204.800,416.700 204.800,481 94,481" fill="#b5b600"/><path d="M94 438.800H150.500M150.500 426L204.800 416.700" stroke="#555" stroke-width="0.500" fill="none"/><rect x="145.100" y="409.600" width="11.100" height="12.300" fill="url(#og)"/><path d="M148.500 411.500h1.200M151 411.300h1.500M149.500 413h1" stroke="#501010" stroke-width="0.900" opacity="0.700"/><path d="M121.7 438.4A36.5 36.5 0 0 0 186 418.7" stroke="#3b3b78" stroke-width="0.700" fill="none"/><path d="M121.7 438.4L150.6 415.7L186 418.7" stroke="#3b3b78" stroke-width="0.600" fill="none"/><path d="M204.600 416.100L212 414.700" stroke="#444" stroke-width="0.600"/><path d="M208.500 414.400l4.200 0.100-3.800 1.400z" fill="#333"/><path d="M150 426h2.300v17.800h13v5.500h-21v-5.500h5.700z" fill="#f4f4f4" stroke="#333" stroke-width="0.600"/></svg>
<div class="r" style="left:0px;top:494.5px;width:291px;height:4.5px;background:#f3f3f3;"></div>
<div class="r" style="left:0px;top:410px;width:13.5px;height:80.5px;background:#f2f3f5;border-bottom:0.7px solid #c8c8c8"></div>
<div class="r" style="left:0px;top:409.5px;width:12.5px;height:0.7px;background:#d2d2d2;"></div>
<div class="r" style="left:290px;top:260px;width:503.2px;height:239.5px;background:#86d2e6;"></div>
<div class="t" style="left:470.50px;top:262.92px;font-size:7.3px;line-height:9.3px;color:#1c1c1c;letter-spacing:-0.085px;">Informe&nbsp; 1: Informe de la Memoria de cálculo</div>
<svg class="r" style="left:296px;top:263px" width="7" height="7" viewBox="0 0 7 7"><rect x="0.400" y="0.400" width="6" height="6" rx="0.800" fill="#f4f4f4" stroke="#9a9a9a" stroke-width="0.600"/><rect x="1.500" y="2" width="1.500" height="2.500" fill="#3a8a50"/></svg>
<div class="r" style="left:768.4px;top:260px;width:21.3px;height:10px;background:#d4504e;"></div>
<svg class="r" style="left:740px;top:260px" width="50" height="11" viewBox="0 0 50 11"><rect x="6.500" y="6" width="3.800" height="1.200" fill="#222"/><rect x="20" y="3" width="4.800" height="4" fill="none" stroke="#222" stroke-width="0.800"/><rect x="20" y="2.800" width="4.800" height="1.200" fill="#222"/><path d="M37.300 3.300l3.400 3.400M40.700 3.300l-3.400 3.400" stroke="#fff" stroke-width="1"/></svg>
<div class="r" style="left:294px;top:275.4px;width:495.5px;height:222.6px;background:#f0f0f0;"></div>
<div class="r" style="left:294px;top:275.4px;width:495.5px;height:9px;background:#f6f7fa;"></div>
<div class="t" style="left:297.00px;top:276.26px;font-size:6.2px;line-height:8.2px;color:#1e1e1e;letter-spacing:-0.153px;">Archivo</div>
<div class="t" style="left:323.40px;top:276.26px;font-size:6.2px;line-height:8.2px;color:#1e1e1e;letter-spacing:-0.248px;">Edición</div>
<div class="r" style="left:294px;top:284.4px;width:495.5px;height:19px;background:#f1f1f1;"></div>
<div class="r" style="left:313px;top:290.5px;width:76px;height:9.5px;background:#fdfdfd;"></div>
<div class="t" style="left:314.90px;top:291.90px;font-size:5.8px;line-height:7.8px;color:#333;letter-spacing:-0.314px;">[Normal]</div>
<div class="r" style="left:394px;top:290.5px;width:77px;height:9.5px;background:#fdfdfd;"></div>
<div class="t" style="left:395.90px;top:291.90px;font-size:5.8px;line-height:7.8px;color:#333;letter-spacing:-0.406px;">Tahoma</div>
<div class="r" style="left:475px;top:290.5px;width:29px;height:9.5px;background:#fdfdfd;"></div>
<div class="t" style="left:477.20px;top:291.90px;font-size:5.8px;line-height:7.8px;color:#333;letter-spacing:0.000px;">8</div>
<svg class="r" style="left:380px;top:293px" width="250" height="5" viewBox="380 293 250 5"><path d="M382.200 294h3.600l-1.800 2.300zM463.600 294h3.600l-1.800 2.300zM499.200 294h3.600l-1.800 2.300zM622 294h3.600l-1.800 2.300z" fill="#222"/></svg>
<div class="r" style="left:507.6px;top:289.5px;width:0.6px;height:11px;background:#c8c8c8;"></div>
<div class="r" style="left:547px;top:289.5px;width:0.6px;height:11px;background:#c8c8c8;"></div>
<div class="r" style="left:597.6px;top:289.5px;width:0.6px;height:11px;background:#c8c8c8;"></div>
<div class="r" style="left:630.5px;top:289.5px;width:0.6px;height:11px;background:#c8c8c8;"></div>
<div class="r" style="left:669px;top:289.5px;width:0.6px;height:11px;background:#c8c8c8;"></div>
<div class="t" style="left:513.80px;top:290.59px;font-size:7px;line-height:9px;color:#111;letter-spacing:0.345px;font-weight:bold;">N</div>
<div class="t" style="left:526.20px;top:292.38px;font-size:7.2px;line-height:9.2px;color:#111;letter-spacing:0.000px;font-weight:bold;font-style:italic;font-family:Liberation Serif,serif;">I</div>
<div class="t" style="left:536.70px;top:290.59px;font-size:7px;line-height:9px;color:#111;letter-spacing:-0.069px;font-weight:bold;"><u>S</u></div>
<div class="r" style="left:572.7px;top:289.7px;width:11.3px;height:11.3px;background:#bfd9f4;border:0.500px solid #78aee6;box-sizing:border-box"></div>
<svg class="r" style="left:550px;top:290px" width="150" height="11" viewBox="550 290 150 11"><path d="M551.7 292.6h6" stroke="#5e5e5e" stroke-width="1.150"/><path d="M551.7 294.1h4" stroke="#5e5e5e" stroke-width="1.150"/><path d="M551.7 295.5h6" stroke="#5e5e5e" stroke-width="1.150"/><path d="M551.7 297.0h3.5" stroke="#5e5e5e" stroke-width="1.150"/><path d="M564.2 292.6h6" stroke="#5e5e5e" stroke-width="1.150"/><path d="M566.2 294.1h4" stroke="#5e5e5e" stroke-width="1.150"/><path d="M564.2 295.5h6" stroke="#5e5e5e" stroke-width="1.150"/><path d="M566.7 297.0h3.5" stroke="#5e5e5e" stroke-width="1.150"/><path d="M575.4 292.6h6" stroke="#5e5e5e" stroke-width="1.150"/><path d="M576.9 294.1h3" stroke="#5e5e5e" stroke-width="1.150"/><path d="M575.4 295.5h6" stroke="#5e5e5e" stroke-width="1.150"/><path d="M576.9 297.0h3" stroke="#5e5e5e" stroke-width="1.150"/><path d="M586.8 292.6h6.4" stroke="#5e5e5e" stroke-width="1.150"/><path d="M586.8 294.1h6.4" stroke="#5e5e5e" stroke-width="1.150"/><path d="M586.8 295.5h6.4" stroke="#5e5e5e" stroke-width="1.150"/><path d="M586.8 297.0h6.4" stroke="#5e5e5e" stroke-width="1.150"/><path d="M638.1 292.600h4.600M638.1 295.300h4.600M638.1 298h4.600" stroke="#3a3a3a" stroke-width="0.900"/><path d="M635.5 292.600h1.500M635.5 295.300h1.500M635.5 298h1.500" stroke="#222" stroke-width="1.300"/><path d="M649.6 292.600h4.600M649.6 295.300h4.600M649.6 298h4.600" stroke="#3a3a3a" stroke-width="0.900"/><path d="M647 292.600h1.500M647 295.300h1.500M647 298h1.500" stroke="#222" stroke-width="1.300"/><path d="M661.1 292.600h4.600M661.1 295.300h4.600M661.1 298h4.600" stroke="#3a3a3a" stroke-width="0.900"/><path d="M658.5 292.600h1.500M658.5 295.300h1.500M658.5 298h1.500" stroke="#222" stroke-width="1.300"/><path d="M662.300 291.800v7" stroke="#333" stroke-width="0.600" stroke-dasharray="1 0.800"/><rect x="675" y="292" width="6.300" height="6.300" fill="#fff" stroke="#333" stroke-width="0.900"/><path d="M677 293.500v3h2.500" stroke="#111" stroke-width="0.800" fill="none"/></svg>
<div class="t" style="left:601.70px;top:291.90px;font-size:5.8px;line-height:7.8px;color:#333;letter-spacing:-0.176px;">118%</div>
<div class="t" style="left:686.80px;top:291.49px;font-size:6.5px;line-height:8.5px;color:#222;letter-spacing:0.000px;font-weight:bold;">¶</div>
<svg class="r" style="left:309px;top:303px" width="475" height="11" viewBox="309 303 475 11"><rect x="329" y="303.800" width="454" height="7.400" fill="#fff"/><rect x="311" y="304.600" width="5.800" height="5.800" fill="#fff" stroke="#c0c0c0" stroke-width="0.500"/><path d="M313 306v2.900h2.300" stroke="#111" stroke-width="1" fill="none"/><path d="M330 309.800H782" stroke="#444" stroke-width="0.800" stroke-dasharray="0.700 1.440"/><path d="M340.9 305V310" stroke="#444" stroke-width="0.600"/><text x="341.5" y="308.300" font-size="4.600" fill="#222" font-family="Liberation Sans" textLength="2.2" lengthAdjust="spacingAndGlyphs">2</text><path d="M351.6 307V310" stroke="#444" stroke-width="0.500"/><path d="M362.3 305V310" stroke="#444" stroke-width="0.600"/><text x="362.9" y="308.300" font-size="4.600" fill="#222" font-family="Liberation Sans" textLength="2.2" lengthAdjust="spacingAndGlyphs">1</text><path d="M373.0 307V310" stroke="#444" stroke-width="0.500"/><path d="M394.4 307V310" stroke="#444" stroke-width="0.500"/><path d="M405.1 305V310" stroke="#444" stroke-width="0.600"/><text x="405.7" y="308.300" font-size="4.600" fill="#222" font-family="Liberation Sans" textLength="2.2" lengthAdjust="spacingAndGlyphs">1</text><path d="M415.8 307V310" stroke="#444" stroke-width="0.500"/><path d="M426.5 305V310" stroke="#444" stroke-width="0.600"/><text x="427.1" y="308.300" font-size="4.600" fill="#222" font-family="Liberation Sans" textLength="2.2" lengthAdjust="spacingAndGlyphs">2</text><path d="M437.2 307V310" stroke="#444" stroke-width="0.500"/><path d="M447.9 305V310" stroke="#444" stroke-width="0.600"/><text x="448.5" y="308.300" font-size="4.600" fill="#222" font-family="Liberation Sans" textLength="2.2" lengthAdjust="spacingAndGlyphs">3</text><path d="M458.6 307V310" stroke="#444" stroke-width="0.500"/><path d="M469.3 305V310" stroke="#444" stroke-width="0.600"/><text x="469.9" y="308.300" font-size="4.600" fill="#222" font-family="Liberation Sans" textLength="2.2" lengthAdjust="spacingAndGlyphs">4</text><path d="M480.0 307V310" stroke="#444" stroke-width="0.500"/><path d="M490.7 305V310" stroke="#444" stroke-width="0.600"/><text x="491.3" y="308.300" font-size="4.600" fill="#222" font-family="Liberation Sans" textLength="2.2" lengthAdjust="spacingAndGlyphs">5</text><path d="M501.4 307V310" stroke="#444" stroke-width="0.500"/><path d="M512.1 305V310" stroke="#444" stroke-width="0.600"/><text x="512.7" y="308.300" font-size="4.600" fill="#222" font-family="Liberation Sans" textLength="2.2" lengthAdjust="spacingAndGlyphs">6</text><path d="M522.8 307V310" stroke="#444" stroke-width="0.500"/><path d="M533.5 305V310" stroke="#444" stroke-width="0.600"/><text x="534.1" y="308.300" font-size="4.600" fill="#222" font-family="Liberation Sans" textLength="2.2" lengthAdjust="spacingAndGlyphs">7</text><path d="M544.2 307V310" stroke="#444" stroke-width="0.500"/><path d="M554.9 305V310" stroke="#444" stroke-width="0.600"/><text x="555.5" y="308.300" font-size="4.600" fill="#222" font-family="Liberation Sans" textLength="2.2" lengthAdjust="spacingAndGlyphs">8</text><path d="M565.6 307V310" stroke="#444" stroke-width="0.500"/><path d="M576.3 305V310" stroke="#444" stroke-width="0.600"/><text x="576.9" y="308.300" font-size="4.600" fill="#222" font-family="Liberation Sans" textLength="2.2" lengthAdjust="spacingAndGlyphs">9</text><path d="M587.0 307V310" stroke="#444" stroke-width="0.500"/><path d="M597.7 305V310" stroke="#444" stroke-width="0.600"/><text x="598.3" y="308.300" font-size="4.600" fill="#222" font-family="Liberation Sans" textLength="4.4" lengthAdjust="spacingAndGlyphs">10</text><path d="M608.4 307V310" stroke="#444" stroke-width="0.500"/><path d="M619.1 305V310" stroke="#444" stroke-width="0.600"/><text x="619.7" y="308.300" font-size="4.600" fill="#222" font-family="Liberation Sans" textLength="4.4" lengthAdjust="spacingAndGlyphs">11</text><path d="M629.8 307V310" stroke="#444" stroke-width="0.500"/><path d="M640.5 305V310" stroke="#444" stroke-width="0.600"/><text x="641.1" y="308.300" font-size="4.600" fill="#222" font-family="Liberation Sans" textLength="4.4" lengthAdjust="spacingAndGlyphs">12</text><path d="M651.2 307V310" stroke="#444" stroke-width="0.500"/><path d="M661.9 305V310" stroke="#444" stroke-width="0.600"/><text x="662.5" y="308.300" font-size="4.600" fill="#222" font-family="Liberation Sans" textLength="4.4" lengthAdjust="spacingAndGlyphs">13</text><path d="M672.6 307V310" stroke="#444" stroke-width="0.500"/><path d="M683.3 305V310" stroke="#444" stroke-width="0.600"/><text x="683.9" y="308.300" font-size="4.600" fill="#222" font-family="Liberation Sans" textLength="4.4" lengthAdjust="spacingAndGlyphs">14</text><path d="M694.0 307V310" stroke="#444" stroke-width="0.500"/><path d="M704.7 305V310" stroke="#444" stroke-width="0.600"/><text x="705.3" y="308.300" font-size="4.600" fill="#222" font-family="Liberation Sans" textLength="4.4" lengthAdjust="spacingAndGlyphs">15</text><path d="M715.4 307V310" stroke="#444" stroke-width="0.500"/><path d="M726.1 305V310" stroke="#444" stroke-width="0.600"/><text x="726.7" y="308.300" font-size="4.600" fill="#222" font-family="Liberation Sans" textLength="4.4" lengthAdjust="spacingAndGlyphs">16</text><path d="M736.8 307V310" stroke="#444" stroke-width="0.500"/><path d="M747.5 305V310" stroke="#444" stroke-width="0.600"/><text x="748.1" y="308.300" font-size="4.600" fill="#222" font-family="Liberation Sans" textLength="4.4" lengthAdjust="spacingAndGlyphs">17</text><path d="M758.2 307V310" stroke="#444" stroke-width="0.500"/><path d="M768.9 305V310" stroke="#444" stroke-width="0.600"/><text x="769.5" y="308.300" font-size="4.600" fill="#222" font-family="Liberation Sans" textLength="4.4" lengthAdjust="spacingAndGlyphs">18</text><path d="M779.6 307V310" stroke="#444" stroke-width="0.500"/><path d="M384 304v8.500" stroke="#444" stroke-width="0.700"/><path d="M381 312.200h4l-2 1.600z" fill="#111"/><path d="M408 304v7M409.300 305v5M407 305.500l3 2-3 2z" stroke="#333" stroke-width="0.700" fill="#333"/><path d="M451 311.500l2.500 2h-3.500zM494 311.500l2.500 2h-3.500z" fill="#222"/><path d="M510 304v7M508.700 305v5M510 305.500l-3 2 3 2z" stroke="#333" stroke-width="0.700" fill="#333"/><path d="M597 304.500v7M683.500 304.500v6" stroke="#444" stroke-width="0.700"/><path d="M735 312h5v1.600h-5z" fill="#111"/></svg>
<div class="r" style="left:308.5px;top:313px;width:475px;height:185.5px;background:#fff;border-top:1px solid #5a5a5a;box-sizing:border-box"></div>
<div class="r" style="left:308.5px;top:314px;width:21px;height:184.5px;background:#d9d9d9;"></div>
<div class="r" style="left:329.2px;top:314px;width:0.8px;height:184.5px;background:#4a4a4a;"></div>
<div class="r" style="left:308.2px;top:314px;width:0.8px;height:184.5px;background:#6e6e6e;"></div>
<svg class="r" style="left:294px;top:313px" width="15" height="186" viewBox="294 313 15 186"><rect x="300" y="313.500" width="8.200" height="185" fill="#fdfdfd"/><path d="M306.500 315V498" stroke="#444" stroke-width="0.800" stroke-dasharray="0.700 1.440"/><text transform="translate(304.800 320.6) rotate(-90)" font-size="5.200" font-weight="bold" fill="#333" font-family="Liberation Sans" textLength="2.4" lengthAdjust="spacingAndGlyphs">4</text><path d="M304 325.7H307" stroke="#555" stroke-width="0.500"/><path d="M300.800 336.4H307" stroke="#555" stroke-width="0.600"/><text transform="translate(304.800 342.0) rotate(-90)" font-size="5.200" font-weight="bold" fill="#333" font-family="Liberation Sans" textLength="2.4" lengthAdjust="spacingAndGlyphs">5</text><path d="M304 347.1H307" stroke="#555" stroke-width="0.500"/><path d="M300.800 357.8H307" stroke="#555" stroke-width="0.600"/><text transform="translate(304.800 363.4) rotate(-90)" font-size="5.200" font-weight="bold" fill="#333" font-family="Liberation Sans" textLength="2.4" lengthAdjust="spacingAndGlyphs">6</text><path d="M304 368.5H307" stroke="#555" stroke-width="0.500"/><path d="M300.800 379.2H307" stroke="#555" stroke-width="0.600"/><text transform="translate(304.800 384.8) rotate(-90)" font-size="5.200" font-weight="bold" fill="#333" font-family="Liberation Sans" textLength="2.4" lengthAdjust="spacingAndGlyphs">7</text><path d="M304 389.9H307" stroke="#555" stroke-width="0.500"/><path d="M300.800 400.6H307" stroke="#555" stroke-width="0.600"/><text transform="translate(304.800 406.2) rotate(-90)" font-size="5.200" font-weight="bold" fill="#333" font-family="Liberation Sans" textLength="2.4" lengthAdjust="spacingAndGlyphs">8</text><path d="M304 411.3H307" stroke="#555" stroke-width="0.500"/><path d="M300.800 422.0H307" stroke="#555" stroke-width="0.600"/><text transform="translate(304.800 427.6) rotate(-90)" font-size="5.200" font-weight="bold" fill="#333" font-family="Liberation Sans" textLength="2.4" lengthAdjust="spacingAndGlyphs">9</text><path d="M304 432.7H307" stroke="#555" stroke-width="0.500"/><path d="M300.800 443.4H307" stroke="#555" stroke-width="0.600"/><text transform="translate(304.800 449.0) rotate(-90)" font-size="5.200" font-weight="bold" fill="#333" font-family="Liberation Sans" textLength="4.8" lengthAdjust="spacingAndGlyphs">10</text><path d="M304 454.1H307" stroke="#555" stroke-width="0.500"/><path d="M300.800 464.8H307" stroke="#555" stroke-width="0.600"/><text transform="translate(304.800 470.4) rotate(-90)" font-size="5.200" font-weight="bold" fill="#333" font-family="Liberation Sans" textLength="4.8" lengthAdjust="spacingAndGlyphs">11</text><path d="M304 475.5H307" stroke="#555" stroke-width="0.500"/><path d="M300.800 486.2H307" stroke="#555" stroke-width="0.600"/><text transform="translate(304.800 491.8) rotate(-90)" font-size="5.200" font-weight="bold" fill="#333" font-family="Liberation Sans" textLength="4.8" lengthAdjust="spacingAndGlyphs">12</text><path d="M304 496.9H307" stroke="#555" stroke-width="0.500"/></svg>
<div class="r" style="left:774px;top:314px;width:8.3px;height:184px;background:#f1f1f1;"></div>
<div class="r" style="left:782.2px;top:313.5px;width:0.9px;height:185px;background:#555;"></div>
<div class="r" style="left:774.3px;top:452.8px;width:7.7px;height:8.6px;background:#c9c9c9;"></div>
<svg class="r" style="left:774px;top:314px" width="8" height="184" viewBox="0 0 8 184"><path d="M1.800 6.800l2.200-2.200 2.200 2.200M1.800 170l2.200 2.200 2.200-2.200" stroke="#444" stroke-width="0.900" fill="none"/></svg>
<div class="t" style="left:384.40px;top:317.26px;font-size:7.4px;line-height:9.4px;color:#111;letter-spacing:0.104px;font-weight:bold;">1.5</div>
<div class="t" style="left:405.00px;top:317.26px;font-size:7.4px;line-height:9.4px;color:#111;letter-spacing:0.143px;font-weight:bold;">Terreno</div>
<div class="t" style="left:384.40px;top:335.62px;font-size:5.6px;line-height:7.6px;color:#222;letter-spacing:0.135px;font-style:italic;">Definición de las cotas del terreno</div>
<svg class="r" style="left:495px;top:350px" width="130" height="92" viewBox="495 350 130 92"><rect x="502" y="409.400" width="29" height="11" fill="#fbc89c"/><rect x="537.500" y="393" width="59.200" height="27.300" fill="#fbc89c"/><rect x="502" y="420" width="94.700" height="17" fill="#c8600c"/><polygon points="537.500,375.300 583,362.400 596.700,362.400 596.700,393 537.500,393" fill="#b4b700"/><path d="M502 409.400H530M537.500 375.300L583 362.400H596.700M537.500 393H596.700M502 420H521M568 420H596.700" stroke="#6a5a30" stroke-width="0.450" fill="none"/><rect x="530" y="370.500" width="8" height="46" fill="#fdfdfd" stroke="#777" stroke-width="0.600"/><rect x="521" y="416" width="47" height="10" fill="#fdfdfd" stroke="#777" stroke-width="0.600"/><rect x="530.400" y="414" width="7.200" height="3" fill="#fdfdfd"/><rect x="581.8" y="365.9" width="4.400" height="5" fill="#fff"/><text x="582.8" y="370.09999999999997" font-size="4.400" font-weight="bold" fill="#222" font-family="Liberation Sans">1</text><rect x="581.8" y="402.9" width="4.400" height="5" fill="#fff"/><text x="582.8" y="407.09999999999997" font-size="4.400" font-weight="bold" fill="#222" font-family="Liberation Sans">2</text><rect x="581.8" y="427.5" width="4.400" height="5" fill="#fff"/><text x="582.8" y="431.7" font-size="4.400" font-weight="bold" fill="#222" font-family="Liberation Sans">3</text><rect x="511.2" y="412.9" width="4.400" height="5" fill="#fff"/><text x="512.1999999999999" y="417.09999999999997" font-size="4.400" font-weight="bold" fill="#222" font-family="Liberation Sans">2</text><text x="546.800" y="363.400" font-size="5.200" font-weight="bold" fill="#222" font-family="Liberation Sans">Z<tspan font-size="3.700" dy="1.100">T</tspan></text><path d="M546 366H555" stroke="#c82020" stroke-width="0.800"/><path d="M544 372.700l2.500-0.600" stroke="#d02020" stroke-width="0.800"/><path d="M566.500 367.500q1.500 3 0.500 6" stroke="#d02020" stroke-width="0.700" fill="none"/><text x="568.500" y="371.800" font-size="4.400" fill="#c03030" font-family="Liberation Sans">β</text><path d="M605 361.600V375.600M603.800 361.600h2.400M603.800 375.600h2.400" stroke="#c82020" stroke-width="0.800"/><text x="607.500" y="369.600" font-size="5.200" font-weight="bold" fill="#222" font-family="Liberation Sans">H<tspan font-size="3.700" dy="1.100">T</tspan></text><text x="512.300" y="400.300" font-size="5.200" font-weight="bold" fill="#222" font-family="Liberation Sans">Z<tspan font-size="3.700" dy="1.100">I</tspan></text><path d="M521.800 407.300l1.600 1.600M523.400 407.300l-1.600 1.600" stroke="#c82020" stroke-width="0.800"/></svg>
<div class="t" style="left:389.00px;top:445.54px;font-size:5.9px;line-height:7.9px;color:#222;letter-spacing:-0.087px;">Junta</div>
<div class="t" style="left:424.00px;top:445.54px;font-size:5.9px;line-height:7.9px;color:#222;letter-spacing:0.114px;">Cota terreno en puntera Z<span style="font-size:4px;vertical-align:-1px">I</span></div>
<div class="t" style="left:525.80px;top:445.54px;font-size:5.9px;line-height:7.9px;color:#222;letter-spacing:-0.032px;">Cota terreno trasdós&nbsp; Z<span style="font-size:4px;vertical-align:-1px">T</span></div>
<div class="t" style="left:615.70px;top:445.54px;font-size:5.9px;line-height:7.9px;color:#222;letter-spacing:0.248px;">Ángulo en trasdós <i>β</i></div>
<div class="t" style="left:693.70px;top:445.54px;font-size:5.9px;line-height:7.9px;color:#222;letter-spacing:0.210px;">Altura talud H<span style="font-size:4px;vertical-align:-1px">T</span></div>
<div class="t" style="left:455.30px;top:453.94px;font-size:5.9px;line-height:7.9px;color:#222;letter-spacing:0.185px;">(m)</div>
<div class="t" style="left:551.30px;top:453.94px;font-size:5.9px;line-height:7.9px;color:#222;letter-spacing:0.185px;">(m)</div>
<div class="t" style="left:639.80px;top:453.94px;font-size:5.9px;line-height:7.9px;color:#222;letter-spacing:0.305px;">(º)</div>
<div class="t" style="left:709.80px;top:453.94px;font-size:5.9px;line-height:7.9px;color:#222;letter-spacing:0.185px;">(m)</div>
<div class="r" style="left:384px;top:460.3px;width:360px;height:0.6px;background:#4a4a4a;"></div>
<div class="r" style="left:384px;top:489.5px;width:360px;height:0.6px;background:#4a4a4a;"></div>
<div class="t" style="left:393.86px;top:461.14px;font-size:5.9px;line-height:7.9px;color:#222;letter-spacing:0.000px;">1</div>
<div class="t" style="left:451.55px;top:461.14px;font-size:5.9px;line-height:7.9px;color:#222;letter-spacing:0.027px;">1.000</div>
<div class="t" style="left:548.05px;top:461.14px;font-size:5.9px;line-height:7.9px;color:#222;letter-spacing:0.027px;">2.000</div>
<div class="t" style="left:637.30px;top:461.14px;font-size:5.9px;line-height:7.9px;color:#222;letter-spacing:0.129px;">10.0</div>
<div class="t" style="left:707.35px;top:461.14px;font-size:5.9px;line-height:7.9px;color:#222;letter-spacing:0.027px;">2.000</div>
<div class="t" style="left:393.86px;top:468.54px;font-size:5.9px;line-height:7.9px;color:#222;letter-spacing:0.000px;">2</div>
<div class="t" style="left:451.55px;top:468.54px;font-size:5.9px;line-height:7.9px;color:#222;letter-spacing:0.027px;">1.000</div>
<div class="t" style="left:548.05px;top:468.54px;font-size:5.9px;line-height:7.9px;color:#222;letter-spacing:0.027px;">5.000</div>
<div class="t" style="left:637.30px;top:468.54px;font-size:5.9px;line-height:7.9px;color:#222;letter-spacing:0.129px;">10.0</div>
<div class="t" style="left:707.35px;top:468.54px;font-size:5.9px;line-height:7.9px;color:#222;letter-spacing:0.027px;">2.000</div>
<div class="t" style="left:393.86px;top:475.94px;font-size:5.9px;line-height:7.9px;color:#222;letter-spacing:0.000px;">3</div>
<div class="t" style="left:451.55px;top:475.94px;font-size:5.9px;line-height:7.9px;color:#222;letter-spacing:0.027px;">1.000</div>
<div class="t" style="left:548.05px;top:475.94px;font-size:5.9px;line-height:7.9px;color:#222;letter-spacing:0.027px;">7.000</div>
<div class="t" style="left:637.30px;top:475.94px;font-size:5.9px;line-height:7.9px;color:#222;letter-spacing:0.129px;">10.0</div>
<div class="t" style="left:707.35px;top:475.94px;font-size:5.9px;line-height:7.9px;color:#222;letter-spacing:0.027px;">2.000</div>
<div class="t" style="left:393.86px;top:483.34px;font-size:5.9px;line-height:7.9px;color:#222;letter-spacing:0.000px;">4</div>
<div class="t" style="left:451.55px;top:483.34px;font-size:5.9px;line-height:7.9px;color:#222;letter-spacing:0.027px;">1.000</div>
<div class="t" style="left:548.05px;top:483.34px;font-size:5.9px;line-height:7.9px;color:#222;letter-spacing:0.027px;">3.000</div>
<div class="t" style="left:637.30px;top:483.34px;font-size:5.9px;line-height:7.9px;color:#222;letter-spacing:0.129px;">10.0</div>
<div class="t" style="left:707.35px;top:483.34px;font-size:5.9px;line-height:7.9px;color:#222;letter-spacing:0.027px;">2.000</div>
<div class="r" style="left:467.3px;top:468.8px;width:0.5px;height:6px;background:#222;"></div>
<div class="r" style="left:793.2px;top:260px;width:7px;height:240px;background:#ebebeb;"></div>
<div class="r" style="left:793.2px;top:237px;width:7px;height:24px;background:#ececec;"></div>
<div class="r" style="left:794px;top:400px;width:6px;height:17.5px;background:#dde7f6;border:0.600px solid #9fb0cc;box-sizing:border-box"></div>
<div class="r" style="left:793.2px;top:419px;width:7px;height:0.7px;background:#aaa;"></div>
<div class="r" style="left:794px;top:421px;width:6px;height:71px;background:#f1f1f1;"></div>
<div class="r" style="left:794.5px;top:473.7px;width:5.5px;height:8.3px;background:#c9c9c9;"></div>
<svg class="r" style="left:794px;top:421px" width="6" height="71" viewBox="0 0 6 71"><path d="M0.800 5l2-2 2 2M0.800 64l2 2 2-2" stroke="#444" stroke-width="0.800" fill="none"/></svg>
<div class="r" style="left:0px;top:498.8px;width:800px;height:1.3px;background:#a3c2c8;"></div>
<div class="r" style="left:290px;top:498.6px;width:503.2px;height:1.5px;background:#8fd0e0;"></div>
<div class="r" style="left:0px;top:500.1px;width:800px;height:3px;background:#fbfbfb;"></div>
</div></body></html>
